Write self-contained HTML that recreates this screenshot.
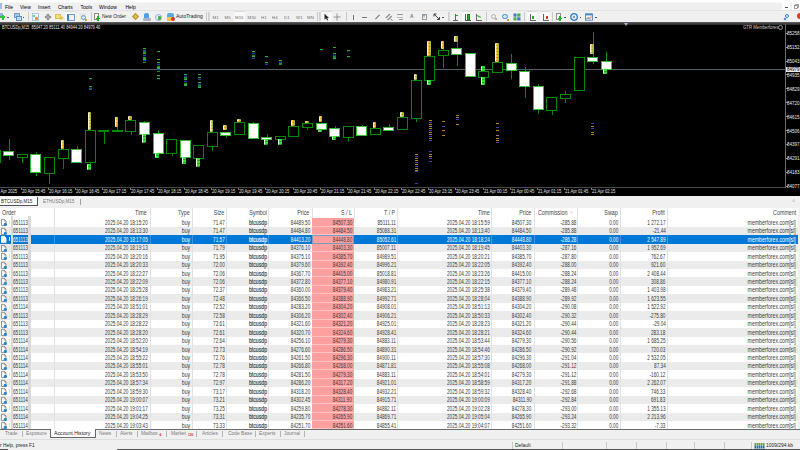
<!DOCTYPE html>
<html><head><meta charset="utf-8"><title>MT5</title>
<style>
html,body{margin:0;padding:0;}
body{width:800px;height:450px;overflow:hidden;position:relative;background:#f0f0f0;font-family:"Liberation Sans",sans-serif;}
div{position:absolute;box-sizing:border-box;}
.t{white-space:pre;}
</style></head><body>
<div style="left:0px;top:0px;width:800px;height:10px;background:linear-gradient(180deg,#ffffff 0 2px,#f0f0f0 3px)"></div><div style="left:0px;top:10px;width:800px;height:1px;background:#e3e3e3"></div><div style="left:0px;top:3px;width:1.5px;height:6px;background:#9cc0ea"></div><div class="t" style="left:5px;top:3.70px;font-size:5.0px;line-height:6.00px;color:#000;">File</div><div class="t" style="left:20px;top:3.70px;font-size:5.0px;line-height:6.00px;color:#000;">View</div><div class="t" style="left:38px;top:3.70px;font-size:5.0px;line-height:6.00px;color:#000;">Insert</div><div class="t" style="left:58px;top:3.70px;font-size:5.0px;line-height:6.00px;color:#000;">Charts</div><div class="t" style="left:80.5px;top:3.70px;font-size:5.0px;line-height:6.00px;color:#000;">Tools</div><div class="t" style="left:99px;top:3.70px;font-size:5.0px;line-height:6.00px;color:#000;">Window</div><div class="t" style="left:125.5px;top:3.70px;font-size:5.0px;line-height:6.00px;color:#000;">Help</div><div style="left:782px;top:2px;width:8px;height:8px;background:#ffffff"></div><div style="left:784.5px;top:7px;width:3px;height:1px;background:#555"></div><div style="left:792px;top:2px;width:8px;height:8px;background:#ffffff"></div><div style="left:792px;top:2px;width:8px;height:8px"><svg width="8" height="8" viewBox="0 0 8 8" style="display:block"><rect x="2.5" y="3.5" width="3" height="3" fill="none" stroke="#777" stroke-width="0.7"/><path d="M3.5,3.5 V2.5 H6.5 V5.5 H5.5" fill="none" stroke="#777" stroke-width="0.7"/></svg></div><div style="left:0px;top:11px;width:800px;height:11px;background:#f0f0f0"></div><div style="left:0px;top:13px;width:3px;height:3px;background:#8fb3d9"></div><div style="left:0px;top:16px;width:5px;height:2px;background:#2ec83a"></div><div style="left:1.5px;top:14.5px;width:2px;height:5px;background:#2ec83a"></div><div style="left:7px;top:16.5px;width:1.6px;height:1.4px;background:#555"></div><div style="left:13.5px;top:13px;width:6px;height:5px;background:#a9c6e6;border:1px solid #6b9bd0"></div><div style="left:15.5px;top:15.5px;width:6px;height:5px;background:#c9dcf0;border:1px solid #5b8cc8"></div><div style="left:22.7px;top:16.5px;width:1.6px;height:1.4px;background:#555"></div><div style="left:28px;top:12px;width:1px;height:9px;background:#c9c9c9"></div><div style="left:32px;top:13px;width:7px;height:7.5px;background:#f4f8fc;border:1px solid #a9c8e8"></div><div style="left:33.3px;top:15px;width:2.2px;height:2.2px;background:#3cc43c;border-radius:50%"></div><div style="left:35.3px;top:17.3px;width:2.4px;height:2.4px;background:#f08050;border-radius:50%"></div><div style="left:43.5px;top:13px;width:8px;height:8px"><svg width="8" height="8" viewBox="0 0 8 8" style="display:block"><path d="M4,0.5 L5.8,2.5 H2.2 Z M4,7.5 L5.8,5.5 H2.2 Z M0.5,4 L2.5,2.2 V5.8 Z M7.5,4 L5.5,2.2 V5.8 Z" fill="#7a7a7a"/><path d="M4,2 V6 M2,4 H6" stroke="#7a7a7a" stroke-width="0.8"/></svg></div><div style="left:55px;top:14px;width:6px;height:5px;background:#f3e07a;border:1px solid #d8c050"></div><div class="t" style="left:58.5px;top:15.20px;font-size:5.5px;line-height:6.60px;color:#e8c020;">&#9733;</div><div style="left:65px;top:11px;width:11px;height:11px;background:#f9f9f9;border-top:1px solid #dcdcdc"></div><div style="left:67px;top:13.5px;width:7.5px;height:7px;background:#eef3fb;border:1px solid #6b9bd0;border-left:2px solid #3d7cc8"></div><div style="left:79.5px;top:13px;width:6px;height:7px;background:#e6e6e6"></div><div style="left:80.5px;top:14.5px;width:5px;height:5px;border:1px solid #5b9bd8;border-radius:50%;background:#dbe9f7"></div><div style="left:85px;top:19px;width:2px;height:2px;background:#d0a030"></div><div style="left:90.5px;top:12px;width:1px;height:9px;background:#c9c9c9"></div><div style="left:94px;top:13px;width:5px;height:7px;background:#f4f4f4;border:1px solid #8a8a8a"></div><div style="left:96px;top:17.5px;width:4px;height:1.5px;background:#1fb52a"></div><div style="left:97.3px;top:16px;width:1.5px;height:4.5px;background:#1fb52a"></div><div class="t" style="left:102px;top:13.49px;font-size:5.5px;line-height:6.60px;color:#222;transform:scaleX(0.9);transform-origin:0 0;">New Order</div><div style="left:132.5px;top:14px;width:5px;height:5px;background:#e8c050;border:1px solid #b8902a;transform:rotate(45deg)"></div><div style="left:144px;top:13px;width:5px;height:5px;background:#4ca0e8;border-radius:2px 2px 0 0"></div><div style="left:143px;top:18px;width:7.5px;height:2.5px;background:#aab4c4;border-radius:1px"></div><div style="left:155px;top:13.5px;width:7px;height:7px;background:#dfeaf5;border:1px solid #8fb0d8;border-radius:50%"></div><div style="left:158px;top:16px;width:2.5px;height:4px;background:#45b045;border-radius:1px"></div><div style="left:166.5px;top:13px;width:7px;height:3.5px;background:#5aa8e0;border-radius:2px 2px 0 0"></div><div style="left:166.5px;top:16.5px;width:7px;height:4px;background:#f0c840"></div><div style="left:170.5px;top:16.5px;width:4px;height:4px;background:#e03030;border-radius:50%"></div><div class="t" style="left:176px;top:13.49px;font-size:5.5px;line-height:6.60px;color:#222;transform:scaleX(0.9);transform-origin:0 0;">AutoTrading</div><div style="left:206px;top:12px;width:1px;height:9px;background:#c9c9c9"></div><div style="left:207.5px;top:12px;width:1px;height:9px;background:#cfcfcf"></div><div style="left:209.0px;top:12px;width:1px;height:9px;background:#d8d8d8"></div><div class="t" style="left:212.5px;top:15.36px;font-size:4.4px;line-height:5.28px;color:#707070;">M1</div><div class="t" style="left:224.5px;top:15.36px;font-size:4.4px;line-height:5.28px;color:#707070;">M5</div><div style="left:234px;top:11px;width:10.5px;height:11px;background:#f9f9f9;border-top:1px solid #dcdcdc"></div><div class="t" style="left:235px;top:15.36px;font-size:4.4px;line-height:5.28px;color:#707070;">M15</div><div class="t" style="left:247.5px;top:15.36px;font-size:4.4px;line-height:5.28px;color:#707070;">M30</div><div class="t" style="left:261px;top:15.36px;font-size:4.4px;line-height:5.28px;color:#707070;">H1</div><div class="t" style="left:272px;top:15.36px;font-size:4.4px;line-height:5.28px;color:#707070;">H4</div><div class="t" style="left:284px;top:15.36px;font-size:4.4px;line-height:5.28px;color:#707070;">D1</div><div class="t" style="left:296px;top:15.36px;font-size:4.4px;line-height:5.28px;color:#707070;">W1</div><div class="t" style="left:307px;top:15.36px;font-size:4.4px;line-height:5.28px;color:#707070;">MN</div><div style="left:316.5px;top:12px;width:1px;height:9px;background:#c9c9c9"></div><div style="left:318.5px;top:12px;width:1px;height:9px;background:#cfcfcf"></div><div style="left:320.0px;top:12px;width:1px;height:9px;background:#d8d8d8"></div><div style="left:321px;top:11px;width:11px;height:11px;background:#f9f9f9;border-top:1px solid #dcdcdc"></div><div style="left:323px;top:13px;width:7px;height:8px"><svg width="7" height="8" viewBox="0 0 7 8" style="display:block"><path d="M1.5,0.8 L1.5,6.8 L3,5.3 L4.2,7.6 L5.2,7.1 L4.1,4.9 L6,4.9 Z" fill="#222"/></svg></div><div style="left:333px;top:13px;width:8px;height:8px"><svg width="8" height="8" viewBox="0 0 8 8" style="display:block"><path d="M4,0.5 V7.5 M0.5,4 H7.5" stroke="#8a8a8a" stroke-width="0.9"/></svg></div><div style="left:345.5px;top:12px;width:1px;height:9px;background:#c9c9c9"></div><div style="left:352.5px;top:14.5px;width:1px;height:5px;background:#777"></div><div style="left:362px;top:17px;width:5px;height:1px;background:#777"></div><div style="left:376.5px;top:14px;width:1px;height:6px;background:#777;transform:rotate(45deg)"></div><div style="left:384.5px;top:13px;width:8px;height:8px"><svg width="8" height="8" viewBox="0 0 8 8" style="display:block"><path d="M0.8,5 L5,1 M2.5,7 L6.8,3" stroke="#8a8a8a" stroke-width="1.1"/><path d="M5.5,6 L7.5,7.5" stroke="#666" stroke-width="0.8"/></svg></div><div style="left:397px;top:14px;width:6px;height:1px;background:#999"></div><div style="left:397px;top:16.5px;width:6px;height:1px;background:#bbb"></div><div style="left:399px;top:19px;width:4px;height:1px;background:#999"></div><div class="t" style="left:410px;top:14.12px;font-size:4.8px;line-height:5.76px;color:#777;font-weight:bold">A</div><div style="left:421.5px;top:14px;width:5.5px;height:6px;border:1px solid #999;background:#f7f7f7"></div><div class="t" style="left:422.8px;top:14.60px;font-size:4px;line-height:4.80px;color:#777;font-weight:bold">T</div><div style="left:432.5px;top:13px;width:8px;height:8px"><svg width="8" height="8" viewBox="0 0 8 8" style="display:block"><path d="M1,1 L6.5,6.5 M1,1 L1,3.5 M1,1 L3.5,1 M6.5,6.5 L4,6.5 M6.5,6.5 L6.5,4" stroke="#444" stroke-width="1"/></svg></div><div style="left:442px;top:16.5px;width:1.6px;height:1.4px;background:#555"></div><div style="left:447.5px;top:12px;width:1px;height:9px;background:#cfcfcf"></div><div style="left:449.0px;top:12px;width:1px;height:9px;background:#d8d8d8"></div><div style="left:455px;top:14px;width:1px;height:6px;background:#666"></div><div style="left:453px;top:19.5px;width:5px;height:1px;background:#666"></div><div style="left:456px;top:15px;width:2px;height:1px;background:#3a3"></div><div style="left:462px;top:11px;width:10px;height:11px;background:#f9f9f9;border-top:1px solid #dcdcdc"></div><div style="left:466.5px;top:14px;width:3px;height:5.5px;background:#2cb82c;border:1px solid #157a15"></div><div style="left:465px;top:19.5px;width:6px;height:1px;background:#555"></div><div style="left:465px;top:13.5px;width:1px;height:7px;background:#555"></div><div style="left:476px;top:14px;width:1px;height:6px;background:#666"></div><div style="left:476px;top:19.5px;width:6px;height:1px;background:#666"></div><div style="left:477px;top:16px;width:4px;height:1px;background:#3a3;transform:rotate(30deg)"></div><div style="left:486px;top:12px;width:1px;height:9px;background:#c9c9c9"></div><div style="left:490.5px;top:13.5px;width:5px;height:5px;border:1px solid #b0b0b0;border-radius:50%"></div><div style="left:495px;top:18px;width:2px;height:2px;background:#b0b0b0"></div><div style="left:502px;top:13.5px;width:5.5px;height:5.5px;border:1px solid #3c8ad8;border-radius:50%;background:#cfe3f7"></div><div style="left:506.5px;top:18.5px;width:2.5px;height:2.5px;background:#d8a030"></div><div style="left:513px;top:13px;width:8px;height:8px"><svg width="8" height="8" viewBox="0 0 8 8" style="display:block"><rect x="0.5" y="0.5" width="3" height="3.2" fill="#3d7cc8"/><rect x="4.2" y="0.5" width="3.3" height="3.2" fill="#4caf50"/><rect x="0.5" y="4.3" width="3" height="3.2" fill="#4caf50"/><rect x="4.2" y="4.3" width="3.3" height="3.2" fill="#3d7cc8"/></svg></div><div style="left:524px;top:12px;width:1px;height:9px;background:#c9c9c9"></div><div style="left:527px;top:11px;width:10px;height:11px;background:#f9f9f9;border-top:1px solid #dcdcdc"></div><div style="left:530px;top:14px;width:1px;height:6px;background:#666"></div><div style="left:530px;top:19.5px;width:6px;height:1px;background:#666"></div><div style="left:532px;top:15.5px;width:2px;height:3px;background:#2a2"></div><div style="left:540px;top:11px;width:9.5px;height:11px;background:#f9f9f9;border-top:1px solid #dcdcdc"></div><div style="left:543px;top:14px;width:1px;height:6px;background:#666"></div><div style="left:543px;top:19.5px;width:6px;height:1px;background:#666"></div><div style="left:545.5px;top:15.5px;width:2px;height:3px;background:#d04020"></div><div style="left:552px;top:12px;width:1px;height:9px;background:#c9c9c9"></div><div style="left:555.5px;top:13px;width:5.5px;height:7px;background:#f2f2f2;border:1px solid #909090"></div><div style="left:558px;top:17.5px;width:4px;height:1.5px;background:#1fb52a"></div><div style="left:559.3px;top:16px;width:1.5px;height:4.5px;background:#1fb52a"></div><div style="left:564px;top:16.5px;width:1.6px;height:1.4px;background:#555"></div><div style="left:569.5px;top:13px;width:8px;height:8px"><svg width="8" height="8" viewBox="0 0 8 8" style="display:block"><circle cx="4" cy="4" r="3.3" fill="#dfeaf6" stroke="#2f78c8" stroke-width="1.3"/><circle cx="4" cy="4" r="0.8" fill="#345"/></svg></div><div style="left:579.5px;top:16.5px;width:1.6px;height:1.4px;background:#555"></div><div style="left:584.5px;top:13px;width:8px;height:8px"><svg width="8" height="8" viewBox="0 0 8 8" style="display:block"><rect x="0.5" y="0.8" width="7" height="6.4" fill="#f4f7fb" stroke="#4a88c8" stroke-width="0.9"/><rect x="0.5" y="0.8" width="7" height="1.6" fill="#4a88c8"/><path d="M1.5,6 L3,4.2 L4.5,5.2 L6.5,3.2" stroke="#e05a30" stroke-width="0.7" fill="none"/><path d="M1.5,6.3 L3,5.2 L4.5,6 L6.5,4.5" stroke="#3aa040" stroke-width="0.6" fill="none"/></svg></div><div style="left:595px;top:16.5px;width:1.6px;height:1.4px;background:#555"></div><div style="left:785px;top:14px;width:4px;height:4px;border:1.2px solid #3f7fd6;border-radius:50%"></div><div style="left:784px;top:17.5px;width:2px;height:2px;background:#3f7fd6;transform:rotate(45deg)"></div><div style="left:797px;top:13px;width:6px;height:6px;background:#e03b24;border-radius:50%"></div><div style="left:0px;top:22px;width:800px;height:1px;background:#5a5a5a"></div><div style="left:0px;top:23px;width:800px;height:1px;background:#404040"></div><div style="left:0px;top:24px;width:800px;height:1px;background:#303030"></div><div style="left:0px;top:25px;width:800px;height:171px;background:#000"></div><div style="left:0;top:0;width:785px;height:450px;overflow:hidden"><div style="left:0px;top:69px;width:785px;height:1px;background:#56606a"></div><div style="left:-10px;top:150px;width:11px;height:13px;background:#000;border:1px solid #008c00"></div><div style="left:9px;top:139px;width:1px;height:12px;background:#008c00"></div><div style="left:9px;top:155px;width:1px;height:5px;background:#008c00"></div><div style="left:3px;top:151px;width:11px;height:5px;background:#fff;border:1px solid #2fbf2f"></div><div style="left:22px;top:157px;width:1px;height:6px;background:#008c00"></div><div style="left:17px;top:154px;width:11px;height:4px;background:#000;border:1px solid #008c00"></div><div style="left:36px;top:152px;width:1px;height:2px;background:#008c00"></div><div style="left:36px;top:172px;width:1px;height:4px;background:#008c00"></div><div style="left:30px;top:154px;width:11px;height:19px;background:#fff;border:1px solid #2fbf2f"></div><div style="left:49px;top:173px;width:1px;height:11px;background:#008c00"></div><div style="left:44px;top:157px;width:11px;height:17px;background:#000;border:1px solid #008c00"></div><div style="left:63px;top:158px;width:1px;height:11px;background:#008c00"></div><div style="left:58px;top:149px;width:11px;height:10px;background:#000;border:1px solid #008c00"></div><div style="left:77px;top:146px;width:1px;height:3px;background:#008c00"></div><div style="left:71px;top:149px;width:11px;height:14px;background:#fff;border:1px solid #2fbf2f"></div><div style="left:90px;top:162px;width:1px;height:2px;background:#008c00"></div><div style="left:85px;top:130px;width:11px;height:33px;background:#000;border:1px solid #008c00"></div><div style="left:104px;top:131px;width:1px;height:13px;background:#008c00"></div><div style="left:98px;top:130px;width:11px;height:2px;background:#000;border:1px solid #008c00"></div><div style="left:117px;top:117px;width:1px;height:13px;background:#008c00"></div><div style="left:112px;top:130px;width:11px;height:2px;background:#000;border:1px solid #008c00"></div><div style="left:131px;top:131px;width:1px;height:4px;background:#008c00"></div><div style="left:125px;top:120px;width:11px;height:12px;background:#000;border:1px solid #008c00"></div><div style="left:144px;top:121px;width:1px;height:1px;background:#008c00"></div><div style="left:139px;top:122px;width:11px;height:13px;background:#fff;border:1px solid #2fbf2f"></div><div style="left:158px;top:130px;width:1px;height:3px;background:#008c00"></div><div style="left:153px;top:133px;width:11px;height:21px;background:#fff;border:1px solid #2fbf2f"></div><div style="left:172px;top:153px;width:1px;height:3px;background:#008c00"></div><div style="left:166px;top:139px;width:11px;height:15px;background:#000;border:1px solid #008c00"></div><div style="left:180px;top:140px;width:11px;height:18px;background:#fff;border:1px solid #2fbf2f"></div><div style="left:193px;top:145px;width:11px;height:14px;background:#000;border:1px solid #008c00"></div><div style="left:212px;top:146px;width:1px;height:5px;background:#008c00"></div><div style="left:207px;top:132px;width:11px;height:15px;background:#000;border:1px solid #008c00"></div><div style="left:226px;top:135px;width:1px;height:3px;background:#008c00"></div><div style="left:220px;top:132px;width:11px;height:4px;background:#fff;border:1px solid #2fbf2f"></div><div style="left:234px;top:122px;width:11px;height:13px;background:#000;border:1px solid #008c00"></div><div style="left:253px;top:122px;width:1px;height:1px;background:#008c00"></div><div style="left:253px;top:138px;width:1px;height:1px;background:#008c00"></div><div style="left:248px;top:123px;width:11px;height:16px;background:#fff;border:1px solid #2fbf2f"></div><div style="left:267px;top:134px;width:1px;height:3px;background:#008c00"></div><div style="left:261px;top:137px;width:11px;height:3px;background:#fff;border:1px solid #2fbf2f"></div><div style="left:275px;top:136px;width:11px;height:4px;background:#000;border:1px solid #008c00"></div><div style="left:288px;top:126px;width:11px;height:11px;background:#000;border:1px solid #008c00"></div><div style="left:307px;top:127px;width:1px;height:3px;background:#008c00"></div><div style="left:302px;top:123px;width:11px;height:5px;background:#000;border:1px solid #008c00"></div><div style="left:321px;top:129px;width:1px;height:1px;background:#008c00"></div><div style="left:316px;top:123px;width:11px;height:7px;background:#fff;border:1px solid #2fbf2f"></div><div style="left:335px;top:126px;width:1px;height:2px;background:#008c00"></div><div style="left:329px;top:128px;width:11px;height:9px;background:#fff;border:1px solid #2fbf2f"></div><div style="left:348px;top:137px;width:1px;height:4px;background:#008c00"></div><div style="left:343px;top:126px;width:11px;height:12px;background:#000;border:1px solid #008c00"></div><div style="left:362px;top:125px;width:1px;height:1px;background:#008c00"></div><div style="left:356px;top:126px;width:11px;height:10px;background:#fff;border:1px solid #2fbf2f"></div><div style="left:370px;top:128px;width:11px;height:7px;background:#000;border:1px solid #008c00"></div><div style="left:389px;top:124px;width:1px;height:3px;background:#008c00"></div><div style="left:383px;top:127px;width:11px;height:4px;background:#fff;border:1px solid #2fbf2f"></div><div style="left:397px;top:117px;width:11px;height:13px;background:#000;border:1px solid #008c00"></div><div style="left:416px;top:118px;width:1px;height:4px;background:#008c00"></div><div style="left:411px;top:80px;width:11px;height:39px;background:#000;border:1px solid #008c00"></div><div style="left:424px;top:56px;width:11px;height:25px;background:#000;border:1px solid #008c00"></div><div style="left:443px;top:41px;width:1px;height:9px;background:#008c00"></div><div style="left:443px;top:55px;width:1px;height:13px;background:#008c00"></div><div style="left:438px;top:50px;width:11px;height:6px;background:#000;border:1px solid #008c00"></div><div style="left:457px;top:36px;width:1px;height:12px;background:#008c00"></div><div style="left:457px;top:54px;width:1px;height:12px;background:#008c00"></div><div style="left:451px;top:48px;width:11px;height:7px;background:#fff;border:1px solid #2fbf2f"></div><div style="left:470px;top:76px;width:1px;height:1px;background:#008c00"></div><div style="left:465px;top:53px;width:11px;height:24px;background:#fff;border:1px solid #2fbf2f"></div><div style="left:478px;top:71px;width:11px;height:7px;background:#000;border:1px solid #008c00"></div><div style="left:492px;top:62px;width:11px;height:11px;background:#000;border:1px solid #008c00"></div><div style="left:511px;top:54px;width:1px;height:9px;background:#008c00"></div><div style="left:511px;top:70px;width:1px;height:9px;background:#008c00"></div><div style="left:506px;top:63px;width:11px;height:8px;background:#fff;border:1px solid #2fbf2f"></div><div style="left:525px;top:67px;width:1px;height:4px;background:#008c00"></div><div style="left:525px;top:86px;width:1px;height:12px;background:#008c00"></div><div style="left:519px;top:71px;width:11px;height:16px;background:#fff;border:1px solid #2fbf2f"></div><div style="left:538px;top:84px;width:1px;height:2px;background:#008c00"></div><div style="left:538px;top:109px;width:1px;height:5px;background:#008c00"></div><div style="left:533px;top:86px;width:11px;height:24px;background:#fff;border:1px solid #2fbf2f"></div><div style="left:552px;top:110px;width:1px;height:5px;background:#008c00"></div><div style="left:546px;top:97px;width:11px;height:14px;background:#000;border:1px solid #008c00"></div><div style="left:565px;top:91px;width:1px;height:3px;background:#008c00"></div><div style="left:565px;top:98px;width:1px;height:5px;background:#008c00"></div><div style="left:560px;top:94px;width:11px;height:5px;background:#000;border:1px solid #008c00"></div><div style="left:579px;top:90px;width:1px;height:1px;background:#008c00"></div><div style="left:574px;top:57px;width:11px;height:34px;background:#000;border:1px solid #008c00"></div><div style="left:593px;top:32px;width:1px;height:25px;background:#008c00"></div><div style="left:593px;top:61px;width:1px;height:3px;background:#008c00"></div><div style="left:587px;top:57px;width:11px;height:5px;background:#fff;border:1px solid #2fbf2f"></div><div style="left:606px;top:52px;width:1px;height:9px;background:#008c00"></div><div style="left:601px;top:61px;width:11px;height:9px;background:#fff;border:1px solid #2fbf2f"></div><div style="left:60.519999999999996px;top:140px;width:3.6px;height:9px;background:linear-gradient(90deg,#fff3c8 0 25%,rgba(0,0,0,0) 25% 60%,rgba(120,170,40,0.55) 60% 100%),repeating-linear-gradient(180deg,#f8d060 0 2px,#ee9a30 2px 3px);border-radius:1px"></div><div style="left:87.68px;top:112px;width:3.6px;height:18px;background:linear-gradient(90deg,#fff3c8 0 25%,rgba(0,0,0,0) 25% 60%,rgba(120,170,40,0.55) 60% 100%),repeating-linear-gradient(180deg,#f8d060 0 2px,#ee9a30 2px 3px);border-radius:1px"></div><div style="left:114.84px;top:117px;width:3.6px;height:10px;background:linear-gradient(90deg,#fff3c8 0 25%,rgba(0,0,0,0) 25% 60%,rgba(120,170,40,0.55) 60% 100%),repeating-linear-gradient(180deg,#f8d060 0 2px,#ee9a30 2px 3px);border-radius:1px"></div><div style="left:128.42px;top:116px;width:3.6px;height:4px;background:linear-gradient(90deg,#fff3c8 0 25%,rgba(0,0,0,0) 25% 60%,rgba(120,170,40,0.55) 60% 100%),repeating-linear-gradient(180deg,#f8d060 0 2px,#ee9a30 2px 3px);border-radius:1px"></div><div style="left:209.89999999999998px;top:120px;width:3.6px;height:12px;background:linear-gradient(90deg,#fff3c8 0 25%,rgba(0,0,0,0) 25% 60%,rgba(120,170,40,0.55) 60% 100%),repeating-linear-gradient(180deg,#f8d060 0 2px,#ee9a30 2px 3px);border-radius:1px"></div><div style="left:223.48px;top:125px;width:3.6px;height:5px;background:linear-gradient(90deg,#fff3c8 0 25%,rgba(0,0,0,0) 25% 60%,rgba(120,170,40,0.55) 60% 100%),repeating-linear-gradient(180deg,#f8d060 0 2px,#ee9a30 2px 3px);border-radius:1px"></div><div style="left:237.06px;top:119px;width:3.6px;height:3px;background:linear-gradient(90deg,#fff3c8 0 25%,rgba(0,0,0,0) 25% 60%,rgba(120,170,40,0.55) 60% 100%),repeating-linear-gradient(180deg,#f8d060 0 2px,#ee9a30 2px 3px);border-radius:1px"></div><div style="left:291.38px;top:120px;width:3.6px;height:6px;background:linear-gradient(90deg,#fff3c8 0 25%,rgba(0,0,0,0) 25% 60%,rgba(120,170,40,0.55) 60% 100%),repeating-linear-gradient(180deg,#f8d060 0 2px,#ee9a30 2px 3px);border-radius:1px"></div><div style="left:304.96px;top:121px;width:3.6px;height:2px;background:linear-gradient(90deg,#fff3c8 0 25%,rgba(0,0,0,0) 25% 60%,rgba(120,170,40,0.55) 60% 100%),repeating-linear-gradient(180deg,#f8d060 0 2px,#ee9a30 2px 3px);border-radius:1px"></div><div style="left:318.53999999999996px;top:116px;width:3.6px;height:6px;background:linear-gradient(90deg,#fff3c8 0 25%,rgba(0,0,0,0) 25% 60%,rgba(120,170,40,0.55) 60% 100%),repeating-linear-gradient(180deg,#f8d060 0 2px,#ee9a30 2px 3px);border-radius:1px"></div><div style="left:372.86px;top:122px;width:3.6px;height:6px;background:linear-gradient(90deg,#fff3c8 0 25%,rgba(0,0,0,0) 25% 60%,rgba(120,170,40,0.55) 60% 100%),repeating-linear-gradient(180deg,#f8d060 0 2px,#ee9a30 2px 3px);border-radius:1px"></div><div style="left:400.02px;top:112px;width:3.6px;height:5px;background:linear-gradient(90deg,#fff3c8 0 25%,rgba(0,0,0,0) 25% 60%,rgba(120,170,40,0.55) 60% 100%),repeating-linear-gradient(180deg,#f8d060 0 2px,#ee9a30 2px 3px);border-radius:1px"></div><div style="left:413.59999999999997px;top:74px;width:3.6px;height:6px;background:linear-gradient(90deg,#fff3c8 0 25%,rgba(0,0,0,0) 25% 60%,rgba(120,170,40,0.55) 60% 100%),repeating-linear-gradient(180deg,#f8d060 0 2px,#ee9a30 2px 3px);border-radius:1px"></div><div style="left:427.18px;top:41px;width:3.6px;height:15px;background:linear-gradient(90deg,#fff3c8 0 25%,rgba(0,0,0,0) 25% 60%,rgba(120,170,40,0.55) 60% 100%),repeating-linear-gradient(180deg,#f8d060 0 2px,#ee9a30 2px 3px);border-radius:1px"></div><div style="left:440.76px;top:41px;width:3.6px;height:8px;background:linear-gradient(90deg,#fff3c8 0 25%,rgba(0,0,0,0) 25% 60%,rgba(120,170,40,0.55) 60% 100%),repeating-linear-gradient(180deg,#f8d060 0 2px,#ee9a30 2px 3px);border-radius:1px"></div><div style="left:454.34px;top:36px;width:3.6px;height:6px;background:linear-gradient(90deg,#fff3c8 0 25%,rgba(0,0,0,0) 25% 60%,rgba(120,170,40,0.55) 60% 100%),repeating-linear-gradient(180deg,#f8d060 0 2px,#ee9a30 2px 3px);border-radius:1px"></div><div style="left:495.08px;top:43px;width:3.6px;height:19px;background:linear-gradient(90deg,#fff3c8 0 25%,rgba(0,0,0,0) 25% 60%,rgba(120,170,40,0.55) 60% 100%),repeating-linear-gradient(180deg,#f8d060 0 2px,#ee9a30 2px 3px);border-radius:1px"></div><div style="left:590.1400000000001px;top:44px;width:3.6px;height:10px;background:linear-gradient(90deg,#fff3c8 0 25%,rgba(0,0,0,0) 25% 60%,rgba(120,170,40,0.55) 60% 100%),repeating-linear-gradient(180deg,#f8d060 0 2px,#ee9a30 2px 3px);border-radius:1px"></div><div style="left:87.38000000000001px;top:164px;width:4px;height:6px;background:linear-gradient(90deg,#e0f8e0 0 25%,rgba(0,0,0,0) 25% 100%),repeating-linear-gradient(180deg,#38e038 0 2px,#20a820 2px 3px);border-radius:1px"></div><div style="left:141.7px;top:134px;width:4px;height:9px;background:linear-gradient(90deg,#e0f8e0 0 25%,rgba(0,0,0,0) 25% 100%),repeating-linear-gradient(180deg,#38e038 0 2px,#20a820 2px 3px);border-radius:1px"></div><div style="left:155.27999999999997px;top:153px;width:4px;height:5px;background:linear-gradient(90deg,#e0f8e0 0 25%,rgba(0,0,0,0) 25% 100%),repeating-linear-gradient(180deg,#38e038 0 2px,#20a820 2px 3px);border-radius:1px"></div><div style="left:182.43999999999997px;top:157px;width:4px;height:7px;background:linear-gradient(90deg,#e0f8e0 0 25%,rgba(0,0,0,0) 25% 100%),repeating-linear-gradient(180deg,#38e038 0 2px,#20a820 2px 3px);border-radius:1px"></div><div style="left:196.01999999999998px;top:158px;width:4px;height:9px;background:linear-gradient(90deg,#e0f8e0 0 25%,rgba(0,0,0,0) 25% 100%),repeating-linear-gradient(180deg,#38e038 0 2px,#20a820 2px 3px);border-radius:1px"></div><div style="left:263.91999999999996px;top:139px;width:4px;height:6px;background:linear-gradient(90deg,#e0f8e0 0 25%,rgba(0,0,0,0) 25% 100%),repeating-linear-gradient(180deg,#38e038 0 2px,#20a820 2px 3px);border-radius:1px"></div><div style="left:277.5px;top:139px;width:4px;height:6px;background:linear-gradient(90deg,#e0f8e0 0 25%,rgba(0,0,0,0) 25% 100%),repeating-linear-gradient(180deg,#38e038 0 2px,#20a820 2px 3px);border-radius:1px"></div><div style="left:318.23999999999995px;top:130px;width:4px;height:2px;background:linear-gradient(90deg,#e0f8e0 0 25%,rgba(0,0,0,0) 25% 100%),repeating-linear-gradient(180deg,#38e038 0 2px,#20a820 2px 3px);border-radius:1px"></div><div style="left:331.82px;top:136px;width:4px;height:4px;background:linear-gradient(90deg,#e0f8e0 0 25%,rgba(0,0,0,0) 25% 100%),repeating-linear-gradient(180deg,#38e038 0 2px,#20a820 2px 3px);border-radius:1px"></div><div style="left:426.88px;top:80px;width:4px;height:5px;background:linear-gradient(90deg,#e0f8e0 0 25%,rgba(0,0,0,0) 25% 100%),repeating-linear-gradient(180deg,#38e038 0 2px,#20a820 2px 3px);border-radius:1px"></div><div style="left:481.2px;top:66px;width:4px;height:5px;background:linear-gradient(90deg,#e0f8e0 0 25%,rgba(0,0,0,0) 25% 100%),repeating-linear-gradient(180deg,#38e038 0 2px,#20a820 2px 3px);border-radius:1px"></div><div style="left:481.2px;top:77px;width:4px;height:8px;background:linear-gradient(90deg,#e0f8e0 0 25%,rgba(0,0,0,0) 25% 100%),repeating-linear-gradient(180deg,#38e038 0 2px,#20a820 2px 3px);border-radius:1px"></div><div style="left:603.4200000000001px;top:69px;width:4px;height:5px;background:linear-gradient(90deg,#e0f8e0 0 25%,rgba(0,0,0,0) 25% 100%),repeating-linear-gradient(180deg,#38e038 0 2px,#20a820 2px 3px);border-radius:1px"></div></div><div style="left:88.5px;top:78px;width:3.5px;height:2px;background:repeating-linear-gradient(180deg,#2fb03a 0 1.3px,#0a1a30 1.3px 1.9px,#2038b0 1.9px 2.9px,#062008 2.9px 3.5px,#1c8a28 3.5px 4.6px,#040404 4.6px 5.2px)"></div><div style="left:88.5px;top:86px;width:3.5px;height:4px;background:repeating-linear-gradient(180deg,#2fb03a 0 1.3px,#0a1a30 1.3px 1.9px,#2038b0 1.9px 2.9px,#062008 2.9px 3.5px,#1c8a28 3.5px 4.6px,#040404 4.6px 5.2px)"></div><div style="left:142.5px;top:48px;width:3.5px;height:16px;background:repeating-linear-gradient(180deg,#2fb03a 0 1.3px,#0a1a30 1.3px 1.9px,#2038b0 1.9px 2.9px,#062008 2.9px 3.5px,#1c8a28 3.5px 4.6px,#040404 4.6px 5.2px)"></div><div style="left:156.5px;top:51px;width:3.5px;height:1px;background:repeating-linear-gradient(180deg,#2fb03a 0 1.3px,#0a1a30 1.3px 1.9px,#2038b0 1.9px 2.9px,#062008 2.9px 3.5px,#1c8a28 3.5px 4.6px,#040404 4.6px 5.2px)"></div><div style="left:156.5px;top:59px;width:3.5px;height:1px;background:repeating-linear-gradient(180deg,#2fb03a 0 1.3px,#0a1a30 1.3px 1.9px,#2038b0 1.9px 2.9px,#062008 2.9px 3.5px,#1c8a28 3.5px 4.6px,#040404 4.6px 5.2px)"></div><div style="left:156.5px;top:62px;width:3.5px;height:10px;background:repeating-linear-gradient(180deg,#2fb03a 0 1.3px,#0a1a30 1.3px 1.9px,#2038b0 1.9px 2.9px,#062008 2.9px 3.5px,#1c8a28 3.5px 4.6px,#040404 4.6px 5.2px)"></div><div style="left:156.5px;top:75px;width:3.5px;height:2px;background:repeating-linear-gradient(180deg,#2fb03a 0 1.3px,#0a1a30 1.3px 1.9px,#2038b0 1.9px 2.9px,#062008 2.9px 3.5px,#1c8a28 3.5px 4.6px,#040404 4.6px 5.2px)"></div><div style="left:156.5px;top:78px;width:3.5px;height:2px;background:repeating-linear-gradient(180deg,#2fb03a 0 1.3px,#0a1a30 1.3px 1.9px,#2038b0 1.9px 2.9px,#062008 2.9px 3.5px,#1c8a28 3.5px 4.6px,#040404 4.6px 5.2px)"></div><div style="left:183.5px;top:74px;width:3.5px;height:12px;background:repeating-linear-gradient(180deg,#2fb03a 0 1.3px,#0a1a30 1.3px 1.9px,#2038b0 1.9px 2.9px,#062008 2.9px 3.5px,#1c8a28 3.5px 4.6px,#040404 4.6px 5.2px)"></div><div style="left:197.5px;top:74px;width:3.5px;height:2px;background:repeating-linear-gradient(180deg,#2fb03a 0 1.3px,#0a1a30 1.3px 1.9px,#2038b0 1.9px 2.9px,#062008 2.9px 3.5px,#1c8a28 3.5px 4.6px,#040404 4.6px 5.2px)"></div><div style="left:197.5px;top:77px;width:3.5px;height:3px;background:repeating-linear-gradient(180deg,#2fb03a 0 1.3px,#0a1a30 1.3px 1.9px,#2038b0 1.9px 2.9px,#062008 2.9px 3.5px,#1c8a28 3.5px 4.6px,#040404 4.6px 5.2px)"></div><div style="left:197.5px;top:82px;width:3.5px;height:6px;background:repeating-linear-gradient(180deg,#2fb03a 0 1.3px,#0a1a30 1.3px 1.9px,#2038b0 1.9px 2.9px,#062008 2.9px 3.5px,#1c8a28 3.5px 4.6px,#040404 4.6px 5.2px)"></div><div style="left:251.5px;top:51px;width:3.5px;height:8px;background:repeating-linear-gradient(180deg,#2fb03a 0 1.3px,#0a1a30 1.3px 1.9px,#2038b0 1.9px 2.9px,#062008 2.9px 3.5px,#1c8a28 3.5px 4.6px,#040404 4.6px 5.2px)"></div><div style="left:264.5px;top:56px;width:3.5px;height:2px;background:repeating-linear-gradient(180deg,#2fb03a 0 1.3px,#0a1a30 1.3px 1.9px,#2038b0 1.9px 2.9px,#062008 2.9px 3.5px,#1c8a28 3.5px 4.6px,#040404 4.6px 5.2px)"></div><div style="left:264.5px;top:62px;width:3.5px;height:3px;background:repeating-linear-gradient(180deg,#2fb03a 0 1.3px,#0a1a30 1.3px 1.9px,#2038b0 1.9px 2.9px,#062008 2.9px 3.5px,#1c8a28 3.5px 4.6px,#040404 4.6px 5.2px)"></div><div style="left:278.5px;top:60px;width:3.5px;height:5px;background:repeating-linear-gradient(180deg,#2fb03a 0 1.3px,#0a1a30 1.3px 1.9px,#2038b0 1.9px 2.9px,#062008 2.9px 3.5px,#1c8a28 3.5px 4.6px,#040404 4.6px 5.2px)"></div><div style="left:319.5px;top:49px;width:3.5px;height:2px;background:repeating-linear-gradient(180deg,#2fb03a 0 1.3px,#0a1a30 1.3px 1.9px,#2038b0 1.9px 2.9px,#062008 2.9px 3.5px,#1c8a28 3.5px 4.6px,#040404 4.6px 5.2px)"></div><div style="left:332.5px;top:47px;width:3.5px;height:1px;background:repeating-linear-gradient(180deg,#2fb03a 0 1.3px,#0a1a30 1.3px 1.9px,#2038b0 1.9px 2.9px,#062008 2.9px 3.5px,#1c8a28 3.5px 4.6px,#040404 4.6px 5.2px)"></div><div style="left:332.5px;top:53px;width:3.5px;height:7px;background:repeating-linear-gradient(180deg,#2fb03a 0 1.3px,#0a1a30 1.3px 1.9px,#2038b0 1.9px 2.9px,#062008 2.9px 3.5px,#1c8a28 3.5px 4.6px,#040404 4.6px 5.2px)"></div><div style="left:346.5px;top:50px;width:3.5px;height:2px;background:repeating-linear-gradient(180deg,#2fb03a 0 1.3px,#0a1a30 1.3px 1.9px,#2038b0 1.9px 2.9px,#062008 2.9px 3.5px,#1c8a28 3.5px 4.6px,#040404 4.6px 5.2px)"></div><div style="left:346.5px;top:56px;width:3.5px;height:2px;background:repeating-linear-gradient(180deg,#2fb03a 0 1.3px,#0a1a30 1.3px 1.9px,#2038b0 1.9px 2.9px,#062008 2.9px 3.5px,#1c8a28 3.5px 4.6px,#040404 4.6px 5.2px)"></div><div style="left:414.5px;top:154px;width:3.5px;height:1.2px;background:#b88028"></div><div style="left:414.5px;top:156px;width:3.5px;height:1.2px;background:#4a3cb0"></div><div style="left:414.5px;top:158px;width:3.5px;height:1.2px;background:#b88028"></div><div style="left:414.5px;top:160px;width:3.5px;height:1.2px;background:#b88028"></div><div style="left:414.5px;top:162px;width:3.5px;height:1.2px;background:#4a3cb0"></div><div style="left:414.5px;top:164px;width:3.5px;height:1.2px;background:#b88028"></div><div style="left:414.5px;top:166px;width:3.5px;height:1.2px;background:#4a3cb0"></div><div style="left:414.5px;top:168px;width:3.5px;height:1.2px;background:#b88028"></div><div style="left:414.5px;top:170px;width:3.5px;height:1.2px;background:#b88028"></div><div style="left:414.5px;top:171px;width:3.5px;height:1.2px;background:#4a3cb0"></div><div style="left:414.5px;top:183px;width:3.5px;height:1.2px;background:#4a3cb0"></div><div style="left:428.5px;top:120px;width:3.5px;height:1.2px;background:#b88028"></div><div style="left:428.5px;top:122px;width:3.5px;height:1.2px;background:#4a3cb0"></div><div style="left:428.5px;top:124px;width:3.5px;height:1.2px;background:#b88028"></div><div style="left:428.5px;top:126px;width:3.5px;height:1.2px;background:#9a7a9a"></div><div style="left:428.5px;top:128px;width:3.5px;height:1.2px;background:#b88028"></div><div style="left:428.5px;top:130px;width:3.5px;height:1.2px;background:#4a3cb0"></div><div style="left:428.5px;top:132px;width:3.5px;height:1.2px;background:#b88028"></div><div style="left:428.5px;top:134px;width:3.5px;height:1.2px;background:#9a7a9a"></div><div style="left:428.5px;top:136px;width:3.5px;height:1.2px;background:#4a3cb0"></div><div style="left:428.5px;top:138px;width:3.5px;height:1.2px;background:#b88028"></div><div style="left:428.5px;top:140px;width:3.5px;height:1.2px;background:#4a3cb0"></div><div style="left:428.5px;top:151px;width:3.5px;height:1.2px;background:#4a3cb0"></div><div style="left:428.5px;top:154px;width:3.5px;height:1.2px;background:#b88028"></div><div style="left:428.5px;top:156px;width:3.5px;height:1.2px;background:#b88028"></div><div style="left:428.5px;top:158px;width:3.5px;height:1.2px;background:#4a3cb0"></div><div style="left:428.5px;top:161px;width:3.5px;height:1.2px;background:#4a3cb0"></div><div style="left:441.5px;top:121px;width:3.5px;height:1.2px;background:#b88028"></div><div style="left:441.5px;top:126px;width:3.5px;height:1.2px;background:#4a3cb0"></div><div style="left:441.5px;top:130px;width:3.5px;height:1.2px;background:#b88028"></div><div style="left:441.5px;top:135px;width:3.5px;height:1.2px;background:#b88028"></div><div style="left:455.5px;top:115px;width:3.5px;height:1.2px;background:#b88028"></div><div style="left:455.5px;top:117px;width:3.5px;height:1.2px;background:#9a7a9a"></div><div style="left:455.5px;top:119px;width:3.5px;height:1.2px;background:#4a3cb0"></div><div style="left:455.5px;top:124px;width:3.5px;height:1.2px;background:#b88028"></div><div style="left:495.5px;top:123px;width:3.5px;height:1.2px;background:#b88028"></div><div style="left:495.5px;top:127px;width:3.5px;height:1.2px;background:#4a3cb0"></div><div style="left:495.5px;top:130px;width:3.5px;height:1.2px;background:#b88028"></div><div style="left:495.5px;top:135px;width:3.5px;height:1.2px;background:#9a7a9a"></div><div style="left:495.5px;top:138px;width:3.5px;height:1.2px;background:#b88028"></div><div style="left:495.5px;top:140px;width:3.5px;height:1.2px;background:#b88028"></div><div style="left:495.5px;top:142px;width:3.5px;height:1.2px;background:#4a3cb0"></div><div style="left:590.5px;top:123px;width:3.5px;height:1.2px;background:#4a3cb0"></div><div style="left:590.5px;top:126px;width:3.5px;height:1.2px;background:#b88028"></div><div style="left:590.5px;top:128px;width:3.5px;height:1.2px;background:#4a3cb0"></div><div style="left:590.5px;top:132px;width:3.5px;height:1.2px;background:#b88028"></div><div style="left:590.5px;top:134px;width:3.5px;height:1.2px;background:#b88028"></div><div style="left:623.5px;top:23px;width:0;height:0;border-left:2.5px solid transparent;border-right:2.5px solid transparent;border-top:3px solid #a8b8c8"></div><div class="t" style="left:1.5px;top:24.96px;font-size:4.9px;line-height:5.88px;color:#e8e8e8;transform:scaleX(0.81);transform-origin:0 0;">BTCUSDp,M15  85047.20 85111.40 84944.20 84979.40</div><div class="t" style="left:743px;top:25.24px;font-size:4.6px;line-height:5.52px;color:#d0d0d0;transform:scaleX(0.93);transform-origin:0 0;">GTR Memberforex</div><div style="left:778px;top:25px;width:5px;height:5px;border:1px solid #9a9a9a;border-radius:50%"></div><div style="left:785px;top:24px;width:1px;height:164px;background:#6a6a6a"></div><div style="left:786px;top:33px;width:1.5px;height:1px;background:#8a8a8a"></div><div class="t" style="left:787px;top:31.16px;font-size:4.9px;line-height:5.88px;color:#e8e8e8;transform:scaleX(0.92);transform-origin:0 0;">85258.2</div><div style="left:786px;top:47px;width:1.5px;height:1px;background:#8a8a8a"></div><div class="t" style="left:787px;top:45.06px;font-size:4.9px;line-height:5.88px;color:#e8e8e8;transform:scaleX(0.92);transform-origin:0 0;">85152.6</div><div style="left:786px;top:61px;width:1.5px;height:1px;background:#8a8a8a"></div><div class="t" style="left:787px;top:58.96px;font-size:4.9px;line-height:5.88px;color:#e8e8e8;transform:scaleX(0.92);transform-origin:0 0;">85043.6</div><div style="left:786px;top:74px;width:1.5px;height:1px;background:#8a8a8a"></div><div class="t" style="left:787px;top:72.86px;font-size:4.9px;line-height:5.88px;color:#e8e8e8;transform:scaleX(0.92);transform-origin:0 0;">84935.0</div><div style="left:786px;top:88px;width:1.5px;height:1px;background:#8a8a8a"></div><div class="t" style="left:787px;top:86.86px;font-size:4.9px;line-height:5.88px;color:#e8e8e8;transform:scaleX(0.92);transform-origin:0 0;">84829.4</div><div style="left:786px;top:102px;width:1.5px;height:1px;background:#8a8a8a"></div><div class="t" style="left:787px;top:100.66px;font-size:4.9px;line-height:5.88px;color:#e8e8e8;transform:scaleX(0.92);transform-origin:0 0;">84720.6</div><div style="left:786px;top:116px;width:1.5px;height:1px;background:#8a8a8a"></div><div class="t" style="left:787px;top:114.66px;font-size:4.9px;line-height:5.88px;color:#e8e8e8;transform:scaleX(0.92);transform-origin:0 0;">84615.0</div><div style="left:786px;top:130px;width:1.5px;height:1px;background:#8a8a8a"></div><div class="t" style="left:787px;top:128.56px;font-size:4.9px;line-height:5.88px;color:#e8e8e8;transform:scaleX(0.92);transform-origin:0 0;">84506.2</div><div style="left:786px;top:144px;width:1.5px;height:1px;background:#8a8a8a"></div><div class="t" style="left:787px;top:142.46px;font-size:4.9px;line-height:5.88px;color:#e8e8e8;transform:scaleX(0.92);transform-origin:0 0;">84397.4</div><div style="left:786px;top:158px;width:1.5px;height:1px;background:#8a8a8a"></div><div class="t" style="left:787px;top:156.36px;font-size:4.9px;line-height:5.88px;color:#e8e8e8;transform:scaleX(0.92);transform-origin:0 0;">84291.8</div><div style="left:786px;top:172px;width:1.5px;height:1px;background:#8a8a8a"></div><div class="t" style="left:787px;top:170.16px;font-size:4.9px;line-height:5.88px;color:#e8e8e8;transform:scaleX(0.92);transform-origin:0 0;">84183.0</div><div style="left:786px;top:186px;width:1.5px;height:1px;background:#8a8a8a"></div><div class="t" style="left:787px;top:184.06px;font-size:4.9px;line-height:5.88px;color:#e8e8e8;transform:scaleX(0.92);transform-origin:0 0;">84077.4</div><div style="left:786px;top:67px;width:14px;height:5px;background:#e8e8e8"></div><div class="t" style="left:787px;top:66.66px;font-size:4.9px;line-height:5.88px;color:#000;transform:scaleX(0.92);transform-origin:0 0;">84979.4</div><div style="left:0px;top:187px;width:785px;height:1px;background:#4a4a4a"></div><div style="left:-6px;top:188px;width:1px;height:1.5px;background:#777"></div><div class="t" style="left:-5.149999999999999px;top:189.06px;font-size:4.9px;line-height:5.88px;color:#e4e4e4;transform:scaleX(0.84);transform-origin:0 0;">20 Apr 2025</div><div style="left:21px;top:188px;width:1px;height:1.5px;background:#777"></div><div class="t" style="left:22.0px;top:189.06px;font-size:4.9px;line-height:5.88px;color:#e4e4e4;transform:scaleX(0.84);transform-origin:0 0;">20 Apr 15:45</div><div style="left:48px;top:188px;width:1px;height:1.5px;background:#777"></div><div class="t" style="left:49.15px;top:189.06px;font-size:4.9px;line-height:5.88px;color:#e4e4e4;transform:scaleX(0.84);transform-origin:0 0;">20 Apr 16:15</div><div style="left:75px;top:188px;width:1px;height:1.5px;background:#777"></div><div class="t" style="left:76.3px;top:189.06px;font-size:4.9px;line-height:5.88px;color:#e4e4e4;transform:scaleX(0.84);transform-origin:0 0;">20 Apr 16:45</div><div style="left:102px;top:188px;width:1px;height:1.5px;background:#777"></div><div class="t" style="left:103.44999999999999px;top:189.06px;font-size:4.9px;line-height:5.88px;color:#e4e4e4;transform:scaleX(0.84);transform-origin:0 0;">20 Apr 17:15</div><div style="left:130px;top:188px;width:1px;height:1.5px;background:#777"></div><div class="t" style="left:130.6px;top:189.06px;font-size:4.9px;line-height:5.88px;color:#e4e4e4;transform:scaleX(0.84);transform-origin:0 0;">20 Apr 17:45</div><div style="left:157px;top:188px;width:1px;height:1.5px;background:#777"></div><div class="t" style="left:157.75px;top:189.06px;font-size:4.9px;line-height:5.88px;color:#e4e4e4;transform:scaleX(0.84);transform-origin:0 0;">20 Apr 18:15</div><div style="left:184px;top:188px;width:1px;height:1.5px;background:#777"></div><div class="t" style="left:184.89999999999998px;top:189.06px;font-size:4.9px;line-height:5.88px;color:#e4e4e4;transform:scaleX(0.84);transform-origin:0 0;">20 Apr 18:45</div><div style="left:211px;top:188px;width:1px;height:1.5px;background:#777"></div><div class="t" style="left:212.04999999999998px;top:189.06px;font-size:4.9px;line-height:5.88px;color:#e4e4e4;transform:scaleX(0.84);transform-origin:0 0;">20 Apr 19:15</div><div style="left:238px;top:188px;width:1px;height:1.5px;background:#777"></div><div class="t" style="left:239.2px;top:189.06px;font-size:4.9px;line-height:5.88px;color:#e4e4e4;transform:scaleX(0.84);transform-origin:0 0;">20 Apr 19:45</div><div style="left:265px;top:188px;width:1px;height:1.5px;background:#777"></div><div class="t" style="left:266.35px;top:189.06px;font-size:4.9px;line-height:5.88px;color:#e4e4e4;transform:scaleX(0.84);transform-origin:0 0;">20 Apr 20:15</div><div style="left:293px;top:188px;width:1px;height:1.5px;background:#777"></div><div class="t" style="left:293.5px;top:189.06px;font-size:4.9px;line-height:5.88px;color:#e4e4e4;transform:scaleX(0.84);transform-origin:0 0;">20 Apr 20:45</div><div style="left:320px;top:188px;width:1px;height:1.5px;background:#777"></div><div class="t" style="left:320.65px;top:189.06px;font-size:4.9px;line-height:5.88px;color:#e4e4e4;transform:scaleX(0.84);transform-origin:0 0;">20 Apr 21:15</div><div style="left:347px;top:188px;width:1px;height:1.5px;background:#777"></div><div class="t" style="left:347.79999999999995px;top:189.06px;font-size:4.9px;line-height:5.88px;color:#e4e4e4;transform:scaleX(0.84);transform-origin:0 0;">20 Apr 21:45</div><div style="left:374px;top:188px;width:1px;height:1.5px;background:#777"></div><div class="t" style="left:374.95px;top:189.06px;font-size:4.9px;line-height:5.88px;color:#e4e4e4;transform:scaleX(0.84);transform-origin:0 0;">20 Apr 22:15</div><div style="left:401px;top:188px;width:1px;height:1.5px;background:#777"></div><div class="t" style="left:402.09999999999997px;top:189.06px;font-size:4.9px;line-height:5.88px;color:#e4e4e4;transform:scaleX(0.84);transform-origin:0 0;">20 Apr 22:45</div><div style="left:428px;top:188px;width:1px;height:1.5px;background:#777"></div><div class="t" style="left:429.25px;top:189.06px;font-size:4.9px;line-height:5.88px;color:#e4e4e4;transform:scaleX(0.84);transform-origin:0 0;">20 Apr 23:15</div><div style="left:455px;top:188px;width:1px;height:1.5px;background:#777"></div><div class="t" style="left:456.4px;top:189.06px;font-size:4.9px;line-height:5.88px;color:#e4e4e4;transform:scaleX(0.84);transform-origin:0 0;">20 Apr 23:45</div><div style="left:483px;top:188px;width:1px;height:1.5px;background:#777"></div><div class="t" style="left:483.54999999999995px;top:189.06px;font-size:4.9px;line-height:5.88px;color:#e4e4e4;transform:scaleX(0.84);transform-origin:0 0;">21 Apr 00:15</div><div style="left:510px;top:188px;width:1px;height:1.5px;background:#777"></div><div class="t" style="left:510.7px;top:189.06px;font-size:4.9px;line-height:5.88px;color:#e4e4e4;transform:scaleX(0.84);transform-origin:0 0;">21 Apr 00:45</div><div style="left:537px;top:188px;width:1px;height:1.5px;background:#777"></div><div class="t" style="left:537.85px;top:189.06px;font-size:4.9px;line-height:5.88px;color:#e4e4e4;transform:scaleX(0.84);transform-origin:0 0;">21 Apr 01:15</div><div style="left:564px;top:188px;width:1px;height:1.5px;background:#777"></div><div class="t" style="left:565.0px;top:189.06px;font-size:4.9px;line-height:5.88px;color:#e4e4e4;transform:scaleX(0.84);transform-origin:0 0;">21 Apr 01:45</div><div style="left:591px;top:188px;width:1px;height:1.5px;background:#777"></div><div class="t" style="left:592.15px;top:189.06px;font-size:4.9px;line-height:5.88px;color:#e4e4e4;transform:scaleX(0.84);transform-origin:0 0;">21 Apr 02:15</div><div style="left:0px;top:197px;width:800px;height:11px;background:#f0f0f0"></div><div style="left:0px;top:197px;width:38px;height:9px;background:#fff;border-right:1px solid #555;border-bottom:1px solid #555"></div><div class="t" style="left:1px;top:198.38px;font-size:5.3px;line-height:6.36px;color:#222;transform:scaleX(0.86);transform-origin:0 0;">BTCUSDp,M15</div><div class="t" style="left:43px;top:198.38px;font-size:5.3px;line-height:6.36px;color:#777;transform:scaleX(0.86);transform-origin:0 0;">ETHUSDp,M15</div><div style="left:80px;top:199px;width:1px;height:6px;background:#a0a0a0"></div><div class="t" style="left:792.5px;top:199.40px;font-size:3.5px;line-height:4.20px;color:#999;">4</div><div style="left:0px;top:208px;width:798px;height:10px;background:#fff"></div><div style="left:798px;top:208px;width:2px;height:222px;background:#f0f0f0"></div><div class="t" style="left:2px;top:209.14px;font-size:6.3px;line-height:7.56px;color:#444;transform:scaleX(0.85);transform-origin:0 0;">Order</div><div class="t" style="right:653.50px;top:209.14px;font-size:6.3px;line-height:7.56px;color:#444;transform:scaleX(0.85);transform-origin:100% 0;">Time</div><div class="t" style="right:610.00px;top:209.14px;font-size:6.3px;line-height:7.56px;color:#444;transform:scaleX(0.85);transform-origin:100% 0;">Type</div><div class="t" style="right:575.50px;top:209.14px;font-size:6.3px;line-height:7.56px;color:#444;transform:scaleX(0.85);transform-origin:100% 0;">Size</div><div class="t" style="right:533.50px;top:209.14px;font-size:6.3px;line-height:7.56px;color:#444;transform:scaleX(0.85);transform-origin:100% 0;">Symbol</div><div class="t" style="right:490.50px;top:209.14px;font-size:6.3px;line-height:7.56px;color:#444;transform:scaleX(0.85);transform-origin:100% 0;">Price</div><div class="t" style="right:448.00px;top:209.14px;font-size:6.3px;line-height:7.56px;color:#444;transform:scaleX(0.85);transform-origin:100% 0;">S / L</div><div class="t" style="right:405.00px;top:209.14px;font-size:6.3px;line-height:7.56px;color:#444;transform:scaleX(0.85);transform-origin:100% 0;">T / P</div><div class="t" style="right:310.50px;top:209.14px;font-size:6.3px;line-height:7.56px;color:#444;transform:scaleX(0.85);transform-origin:100% 0;">Time</div><div class="t" style="right:268.50px;top:209.14px;font-size:6.3px;line-height:7.56px;color:#444;transform:scaleX(0.85);transform-origin:100% 0;">Price</div><div class="t" style="left:538px;top:209.14px;font-size:6.3px;line-height:7.56px;color:#444;transform:scaleX(0.85);transform-origin:0 0;">Commission</div><div class="t" style="right:182.50px;top:209.14px;font-size:6.3px;line-height:7.56px;color:#444;transform:scaleX(0.85);transform-origin:100% 0;">Swap</div><div class="t" style="right:135.00px;top:209.14px;font-size:6.3px;line-height:7.56px;color:#444;transform:scaleX(0.85);transform-origin:100% 0;">Profit</div><div class="t" style="right:4.00px;top:209.14px;font-size:6.3px;line-height:7.56px;color:#444;transform:scaleX(0.85);transform-origin:100% 0;">Comment</div><div class="t" style="left:570px;top:210.30px;font-size:4.5px;line-height:5.40px;color:#aaa;">&#9663;</div><div style="left:0px;top:218px;width:798px;height:9px;background:#ffffff"></div><div style="left:312px;top:218px;width:41.5px;height:9px;background:#ffa0a0"></div><div style="left:312px;top:226px;width:41.5px;height:1px;background:#ffc4c4"></div><div style="left:0;top:218px;width:9px;height:9px"><svg width="9" height="9" style="display:block"><path d="M1.5,1.3 H4.3 L6,3 V7.6 H1.5 Z" fill="#fff" stroke="#7a7a7a" stroke-width="0.8"/><path d="M4.3,1.3 V3 H6" fill="none" stroke="#7a7a7a" stroke-width="0.6"/><circle cx="5.3" cy="6.4" r="1.6" fill="#1f86d8"/></svg></div><div style="left:9px;top:220px;width:1px;height:4px;background:#ebe6b8"></div><div class="t" style="left:13px;top:218.89px;font-size:6.3px;line-height:7.56px;color:#3a3a3a;transform:scaleX(0.74);transform-origin:0 0;">6511132</div><div class="t" style="right:652.40px;top:218.89px;font-size:6.3px;line-height:7.56px;color:#3a3a3a;transform:scaleX(0.74);transform-origin:100% 0;">2025.04.20 18:15:20</div><div class="t" style="right:609.80px;top:218.89px;font-size:6.3px;line-height:7.56px;color:#3a3a3a;transform:scaleX(0.82);transform-origin:100% 0;">buy</div><div class="t" style="right:575.50px;top:218.89px;font-size:6.3px;line-height:7.56px;color:#3a3a3a;transform:scaleX(0.74);transform-origin:100% 0;">71.47</div><div class="t" style="right:532.80px;top:218.89px;font-size:6.3px;line-height:7.56px;color:#3a3a3a;transform:scaleX(0.82);transform-origin:100% 0;-webkit-text-stroke:0.15px currentColor">btcusdp</div><div class="t" style="right:490.00px;top:218.89px;font-size:6.3px;line-height:7.56px;color:#3a3a3a;transform:scaleX(0.74);transform-origin:100% 0;">84489.50</div><div class="t" style="right:448.00px;top:218.89px;font-size:6.3px;line-height:7.56px;color:#3a3a3a;transform:scaleX(0.74);transform-origin:100% 0;">84507.30</div><div class="t" style="right:404.20px;top:218.89px;font-size:6.3px;line-height:7.56px;color:#3a3a3a;transform:scaleX(0.74);transform-origin:100% 0;">85111.11</div><div class="t" style="right:310.50px;top:218.89px;font-size:6.3px;line-height:7.56px;color:#3a3a3a;transform:scaleX(0.74);transform-origin:100% 0;">2025.04.20 18:15:59</div><div class="t" style="right:268.50px;top:218.89px;font-size:6.3px;line-height:7.56px;color:#3a3a3a;transform:scaleX(0.74);transform-origin:100% 0;">84507.30</div><div class="t" style="right:224.00px;top:218.89px;font-size:6.3px;line-height:7.56px;color:#3a3a3a;transform:scaleX(0.74);transform-origin:100% 0;">-285.88</div><div class="t" style="right:181.80px;top:218.89px;font-size:6.3px;line-height:7.56px;color:#3a3a3a;transform:scaleX(0.74);transform-origin:100% 0;">0.00</div><div class="t" style="right:134.30px;top:218.89px;font-size:6.3px;line-height:7.56px;color:#3a3a3a;transform:scaleX(0.74);transform-origin:100% 0;">1 272.17</div><div class="t" style="right:4.00px;top:218.89px;font-size:6.3px;line-height:7.56px;color:#3a3a3a;transform:scaleX(0.82);transform-origin:100% 0;">memberforex.com[sl]</div><div style="left:0px;top:227px;width:798px;height:8px;background:#ebebeb"></div><div style="left:312px;top:227px;width:41.5px;height:8px;background:#ffa0a0"></div><div style="left:312px;top:234px;width:41.5px;height:1px;background:#ffc4c4"></div><div style="left:0;top:227px;width:9px;height:9px"><svg width="9" height="9" style="display:block"><path d="M1.5,1.3 H4.3 L6,3 V7.6 H1.5 Z" fill="#fff" stroke="#7a7a7a" stroke-width="0.8"/><path d="M4.3,1.3 V3 H6" fill="none" stroke="#7a7a7a" stroke-width="0.6"/><circle cx="5.3" cy="6.4" r="1.6" fill="#1f86d8"/></svg></div><div style="left:9px;top:229px;width:1px;height:4px;background:#ebe6b8"></div><div class="t" style="left:13px;top:227.33px;font-size:6.3px;line-height:7.56px;color:#3a3a3a;transform:scaleX(0.74);transform-origin:0 0;">6511132</div><div class="t" style="right:652.40px;top:227.33px;font-size:6.3px;line-height:7.56px;color:#3a3a3a;transform:scaleX(0.74);transform-origin:100% 0;">2025.04.20 18:13:30</div><div class="t" style="right:609.80px;top:227.33px;font-size:6.3px;line-height:7.56px;color:#3a3a3a;transform:scaleX(0.82);transform-origin:100% 0;">buy</div><div class="t" style="right:575.50px;top:227.33px;font-size:6.3px;line-height:7.56px;color:#3a3a3a;transform:scaleX(0.74);transform-origin:100% 0;">71.47</div><div class="t" style="right:532.80px;top:227.33px;font-size:6.3px;line-height:7.56px;color:#3a3a3a;transform:scaleX(0.82);transform-origin:100% 0;-webkit-text-stroke:0.15px currentColor">btcusdp</div><div class="t" style="right:490.00px;top:227.33px;font-size:6.3px;line-height:7.56px;color:#3a3a3a;transform:scaleX(0.74);transform-origin:100% 0;">84484.80</div><div class="t" style="right:448.00px;top:227.33px;font-size:6.3px;line-height:7.56px;color:#3a3a3a;transform:scaleX(0.74);transform-origin:100% 0;">84484.50</div><div class="t" style="right:404.20px;top:227.33px;font-size:6.3px;line-height:7.56px;color:#3a3a3a;transform:scaleX(0.74);transform-origin:100% 0;">85088.31</div><div class="t" style="right:310.50px;top:227.33px;font-size:6.3px;line-height:7.56px;color:#3a3a3a;transform:scaleX(0.74);transform-origin:100% 0;">2025.04.20 18:13:40</div><div class="t" style="right:268.50px;top:227.33px;font-size:6.3px;line-height:7.56px;color:#3a3a3a;transform:scaleX(0.74);transform-origin:100% 0;">84484.50</div><div class="t" style="right:224.00px;top:227.33px;font-size:6.3px;line-height:7.56px;color:#3a3a3a;transform:scaleX(0.74);transform-origin:100% 0;">-285.88</div><div class="t" style="right:181.80px;top:227.33px;font-size:6.3px;line-height:7.56px;color:#3a3a3a;transform:scaleX(0.74);transform-origin:100% 0;">0.00</div><div class="t" style="right:134.30px;top:227.33px;font-size:6.3px;line-height:7.56px;color:#3a3a3a;transform:scaleX(0.74);transform-origin:100% 0;">-21.44</div><div class="t" style="right:4.00px;top:227.33px;font-size:6.3px;line-height:7.56px;color:#3a3a3a;transform:scaleX(0.82);transform-origin:100% 0;">memberforex.com[sl]</div><div style="left:0px;top:235px;width:798px;height:9px;background:#0078d7"></div><div style="left:312px;top:235px;width:41.5px;height:9px;background:#ff9f9f;border:1px solid #7a9cc0"></div><div style="left:0;top:235px;width:9px;height:9px"><svg width="9" height="9" style="display:block"><path d="M1.5,1.3 H4.3 L6,3 V7.6 H1.5 Z" fill="#fff" stroke="#ffffff" stroke-width="0.8"/><path d="M4.3,1.3 V3 H6" fill="none" stroke="#ffffff" stroke-width="0.6"/></svg></div><div style="left:9px;top:237px;width:1px;height:4px;background:#ebe6b8"></div><div class="t" style="left:13px;top:235.78px;font-size:6.3px;line-height:7.56px;color:#fff;transform:scaleX(0.74);transform-origin:0 0;">6511133</div><div class="t" style="right:652.40px;top:235.78px;font-size:6.3px;line-height:7.56px;color:#fff;transform:scaleX(0.74);transform-origin:100% 0;">2025.04.20 18:17:05</div><div class="t" style="right:609.80px;top:235.78px;font-size:6.3px;line-height:7.56px;color:#fff;transform:scaleX(0.82);transform-origin:100% 0;">buy</div><div class="t" style="right:575.50px;top:235.78px;font-size:6.3px;line-height:7.56px;color:#fff;transform:scaleX(0.74);transform-origin:100% 0;">71.57</div><div class="t" style="right:532.80px;top:235.78px;font-size:6.3px;line-height:7.56px;color:#fff;transform:scaleX(0.82);transform-origin:100% 0;-webkit-text-stroke:0.15px currentColor">btcusdp</div><div class="t" style="right:490.00px;top:235.78px;font-size:6.3px;line-height:7.56px;color:#fff;transform:scaleX(0.74);transform-origin:100% 0;">84413.20</div><div class="t" style="right:448.00px;top:235.78px;font-size:6.3px;line-height:7.56px;color:#3a3a3a;transform:scaleX(0.74);transform-origin:100% 0;">84448.80</div><div class="t" style="right:404.20px;top:235.78px;font-size:6.3px;line-height:7.56px;color:#fff;transform:scaleX(0.74);transform-origin:100% 0;">85052.61</div><div class="t" style="right:310.50px;top:235.78px;font-size:6.3px;line-height:7.56px;color:#fff;transform:scaleX(0.74);transform-origin:100% 0;">2025.04.20 18:18:24</div><div class="t" style="right:268.50px;top:235.78px;font-size:6.3px;line-height:7.56px;color:#fff;transform:scaleX(0.74);transform-origin:100% 0;">84448.80</div><div class="t" style="right:224.00px;top:235.78px;font-size:6.3px;line-height:7.56px;color:#fff;transform:scaleX(0.74);transform-origin:100% 0;">-286.28</div><div class="t" style="right:181.80px;top:235.78px;font-size:6.3px;line-height:7.56px;color:#fff;transform:scaleX(0.74);transform-origin:100% 0;">0.00</div><div class="t" style="right:134.30px;top:235.78px;font-size:6.3px;line-height:7.56px;color:#fff;transform:scaleX(0.74);transform-origin:100% 0;">2 547.89</div><div class="t" style="right:4.00px;top:235.78px;font-size:6.3px;line-height:7.56px;color:#fff;transform:scaleX(0.82);transform-origin:100% 0;">memberforex.com[sl]</div><div style="left:0px;top:244px;width:798px;height:8px;background:#ebebeb"></div><div style="left:312px;top:244px;width:41.5px;height:8px;background:#ffa0a0"></div><div style="left:312px;top:251px;width:41.5px;height:1px;background:#ffc4c4"></div><div style="left:0;top:244px;width:9px;height:9px"><svg width="9" height="9" style="display:block"><path d="M1.5,1.3 H4.3 L6,3 V7.6 H1.5 Z" fill="#fff" stroke="#7a7a7a" stroke-width="0.8"/><path d="M4.3,1.3 V3 H6" fill="none" stroke="#7a7a7a" stroke-width="0.6"/><circle cx="5.3" cy="6.4" r="1.6" fill="#1f86d8"/></svg></div><div style="left:9px;top:246px;width:1px;height:4px;background:#ebe6b8"></div><div class="t" style="left:13px;top:244.22px;font-size:6.3px;line-height:7.56px;color:#3a3a3a;transform:scaleX(0.74);transform-origin:0 0;">6511134</div><div class="t" style="right:652.40px;top:244.22px;font-size:6.3px;line-height:7.56px;color:#3a3a3a;transform:scaleX(0.74);transform-origin:100% 0;">2025.04.20 18:19:13</div><div class="t" style="right:609.80px;top:244.22px;font-size:6.3px;line-height:7.56px;color:#3a3a3a;transform:scaleX(0.82);transform-origin:100% 0;">buy</div><div class="t" style="right:575.50px;top:244.22px;font-size:6.3px;line-height:7.56px;color:#3a3a3a;transform:scaleX(0.74);transform-origin:100% 0;">71.79</div><div class="t" style="right:532.80px;top:244.22px;font-size:6.3px;line-height:7.56px;color:#3a3a3a;transform:scaleX(0.82);transform-origin:100% 0;-webkit-text-stroke:0.15px currentColor">btcusdp</div><div class="t" style="right:490.00px;top:244.22px;font-size:6.3px;line-height:7.56px;color:#3a3a3a;transform:scaleX(0.74);transform-origin:100% 0;">84376.10</div><div class="t" style="right:448.00px;top:244.22px;font-size:6.3px;line-height:7.56px;color:#3a3a3a;transform:scaleX(0.74);transform-origin:100% 0;">84403.30</div><div class="t" style="right:404.20px;top:244.22px;font-size:6.3px;line-height:7.56px;color:#3a3a3a;transform:scaleX(0.74);transform-origin:100% 0;">85007.11</div><div class="t" style="right:310.50px;top:244.22px;font-size:6.3px;line-height:7.56px;color:#3a3a3a;transform:scaleX(0.74);transform-origin:100% 0;">2025.04.20 18:19:45</div><div class="t" style="right:268.50px;top:244.22px;font-size:6.3px;line-height:7.56px;color:#3a3a3a;transform:scaleX(0.74);transform-origin:100% 0;">84403.30</div><div class="t" style="right:224.00px;top:244.22px;font-size:6.3px;line-height:7.56px;color:#3a3a3a;transform:scaleX(0.74);transform-origin:100% 0;">-287.16</div><div class="t" style="right:181.80px;top:244.22px;font-size:6.3px;line-height:7.56px;color:#3a3a3a;transform:scaleX(0.74);transform-origin:100% 0;">0.00</div><div class="t" style="right:134.30px;top:244.22px;font-size:6.3px;line-height:7.56px;color:#3a3a3a;transform:scaleX(0.74);transform-origin:100% 0;">1 952.69</div><div class="t" style="right:4.00px;top:244.22px;font-size:6.3px;line-height:7.56px;color:#3a3a3a;transform:scaleX(0.82);transform-origin:100% 0;">memberforex.com[sl]</div><div style="left:0px;top:252px;width:798px;height:9px;background:#ffffff"></div><div style="left:312px;top:252px;width:41.5px;height:9px;background:#ffa0a0"></div><div style="left:312px;top:260px;width:41.5px;height:1px;background:#ffc4c4"></div><div style="left:0;top:252px;width:9px;height:9px"><svg width="9" height="9" style="display:block"><path d="M1.5,1.3 H4.3 L6,3 V7.6 H1.5 Z" fill="#fff" stroke="#7a7a7a" stroke-width="0.8"/><path d="M4.3,1.3 V3 H6" fill="none" stroke="#7a7a7a" stroke-width="0.6"/><circle cx="5.3" cy="6.4" r="1.6" fill="#1f86d8"/></svg></div><div style="left:9px;top:254px;width:1px;height:4px;background:#ebe6b8"></div><div class="t" style="left:13px;top:252.67px;font-size:6.3px;line-height:7.56px;color:#3a3a3a;transform:scaleX(0.74);transform-origin:0 0;">6511134</div><div class="t" style="right:652.40px;top:252.67px;font-size:6.3px;line-height:7.56px;color:#3a3a3a;transform:scaleX(0.74);transform-origin:100% 0;">2025.04.20 18:20:16</div><div class="t" style="right:609.80px;top:252.67px;font-size:6.3px;line-height:7.56px;color:#3a3a3a;transform:scaleX(0.82);transform-origin:100% 0;">buy</div><div class="t" style="right:575.50px;top:252.67px;font-size:6.3px;line-height:7.56px;color:#3a3a3a;transform:scaleX(0.74);transform-origin:100% 0;">71.95</div><div class="t" style="right:532.80px;top:252.67px;font-size:6.3px;line-height:7.56px;color:#3a3a3a;transform:scaleX(0.82);transform-origin:100% 0;-webkit-text-stroke:0.15px currentColor">btcusdp</div><div class="t" style="right:490.00px;top:252.67px;font-size:6.3px;line-height:7.56px;color:#3a3a3a;transform:scaleX(0.74);transform-origin:100% 0;">84375.10</div><div class="t" style="right:448.00px;top:252.67px;font-size:6.3px;line-height:7.56px;color:#3a3a3a;transform:scaleX(0.74);transform-origin:100% 0;">84385.70</div><div class="t" style="right:404.20px;top:252.67px;font-size:6.3px;line-height:7.56px;color:#3a3a3a;transform:scaleX(0.74);transform-origin:100% 0;">84989.51</div><div class="t" style="right:310.50px;top:252.67px;font-size:6.3px;line-height:7.56px;color:#3a3a3a;transform:scaleX(0.74);transform-origin:100% 0;">2025.04.20 18:20:21</div><div class="t" style="right:268.50px;top:252.67px;font-size:6.3px;line-height:7.56px;color:#3a3a3a;transform:scaleX(0.74);transform-origin:100% 0;">84385.70</div><div class="t" style="right:224.00px;top:252.67px;font-size:6.3px;line-height:7.56px;color:#3a3a3a;transform:scaleX(0.74);transform-origin:100% 0;">-287.80</div><div class="t" style="right:181.80px;top:252.67px;font-size:6.3px;line-height:7.56px;color:#3a3a3a;transform:scaleX(0.74);transform-origin:100% 0;">0.00</div><div class="t" style="right:134.30px;top:252.67px;font-size:6.3px;line-height:7.56px;color:#3a3a3a;transform:scaleX(0.74);transform-origin:100% 0;">762.67</div><div class="t" style="right:4.00px;top:252.67px;font-size:6.3px;line-height:7.56px;color:#3a3a3a;transform:scaleX(0.82);transform-origin:100% 0;">memberforex.com[sl]</div><div style="left:0px;top:261px;width:798px;height:8px;background:#ebebeb"></div><div style="left:312px;top:261px;width:41.5px;height:8px;background:#ffa0a0"></div><div style="left:312px;top:268px;width:41.5px;height:1px;background:#ffc4c4"></div><div style="left:0;top:261px;width:9px;height:9px"><svg width="9" height="9" style="display:block"><path d="M1.5,1.3 H4.3 L6,3 V7.6 H1.5 Z" fill="#fff" stroke="#7a7a7a" stroke-width="0.8"/><path d="M4.3,1.3 V3 H6" fill="none" stroke="#7a7a7a" stroke-width="0.6"/><circle cx="5.3" cy="6.4" r="1.6" fill="#1f86d8"/></svg></div><div style="left:9px;top:263px;width:1px;height:4px;background:#ebe6b8"></div><div class="t" style="left:13px;top:261.11px;font-size:6.3px;line-height:7.56px;color:#3a3a3a;transform:scaleX(0.74);transform-origin:0 0;">6511135</div><div class="t" style="right:652.40px;top:261.11px;font-size:6.3px;line-height:7.56px;color:#3a3a3a;transform:scaleX(0.74);transform-origin:100% 0;">2025.04.20 18:20:33</div><div class="t" style="right:609.80px;top:261.11px;font-size:6.3px;line-height:7.56px;color:#3a3a3a;transform:scaleX(0.82);transform-origin:100% 0;">buy</div><div class="t" style="right:575.50px;top:261.11px;font-size:6.3px;line-height:7.56px;color:#3a3a3a;transform:scaleX(0.74);transform-origin:100% 0;">72.00</div><div class="t" style="right:532.80px;top:261.11px;font-size:6.3px;line-height:7.56px;color:#3a3a3a;transform:scaleX(0.82);transform-origin:100% 0;-webkit-text-stroke:0.15px currentColor">btcusdp</div><div class="t" style="right:490.00px;top:261.11px;font-size:6.3px;line-height:7.56px;color:#3a3a3a;transform:scaleX(0.74);transform-origin:100% 0;">84379.60</div><div class="t" style="right:448.00px;top:261.11px;font-size:6.3px;line-height:7.56px;color:#3a3a3a;transform:scaleX(0.74);transform-origin:100% 0;">84392.40</div><div class="t" style="right:404.20px;top:261.11px;font-size:6.3px;line-height:7.56px;color:#3a3a3a;transform:scaleX(0.74);transform-origin:100% 0;">84996.21</div><div class="t" style="right:310.50px;top:261.11px;font-size:6.3px;line-height:7.56px;color:#3a3a3a;transform:scaleX(0.74);transform-origin:100% 0;">2025.04.20 18:22:05</div><div class="t" style="right:268.50px;top:261.11px;font-size:6.3px;line-height:7.56px;color:#3a3a3a;transform:scaleX(0.74);transform-origin:100% 0;">84392.40</div><div class="t" style="right:224.00px;top:261.11px;font-size:6.3px;line-height:7.56px;color:#3a3a3a;transform:scaleX(0.74);transform-origin:100% 0;">-288.00</div><div class="t" style="right:181.80px;top:261.11px;font-size:6.3px;line-height:7.56px;color:#3a3a3a;transform:scaleX(0.74);transform-origin:100% 0;">0.00</div><div class="t" style="right:134.30px;top:261.11px;font-size:6.3px;line-height:7.56px;color:#3a3a3a;transform:scaleX(0.74);transform-origin:100% 0;">921.60</div><div class="t" style="right:4.00px;top:261.11px;font-size:6.3px;line-height:7.56px;color:#3a3a3a;transform:scaleX(0.82);transform-origin:100% 0;">memberforex.com[sl]</div><div style="left:0px;top:269px;width:798px;height:8px;background:#ffffff"></div><div style="left:312px;top:269px;width:41.5px;height:8px;background:#ffa0a0"></div><div style="left:312px;top:276px;width:41.5px;height:1px;background:#ffc4c4"></div><div style="left:0;top:269px;width:9px;height:9px"><svg width="9" height="9" style="display:block"><path d="M1.5,1.3 H4.3 L6,3 V7.6 H1.5 Z" fill="#fff" stroke="#7a7a7a" stroke-width="0.8"/><path d="M4.3,1.3 V3 H6" fill="none" stroke="#7a7a7a" stroke-width="0.6"/><circle cx="5.3" cy="6.4" r="1.6" fill="#1f86d8"/></svg></div><div style="left:9px;top:271px;width:1px;height:4px;background:#ebe6b8"></div><div class="t" style="left:13px;top:269.56px;font-size:6.3px;line-height:7.56px;color:#3a3a3a;transform:scaleX(0.74);transform-origin:0 0;">6511135</div><div class="t" style="right:652.40px;top:269.56px;font-size:6.3px;line-height:7.56px;color:#3a3a3a;transform:scaleX(0.74);transform-origin:100% 0;">2025.04.20 18:22:27</div><div class="t" style="right:609.80px;top:269.56px;font-size:6.3px;line-height:7.56px;color:#3a3a3a;transform:scaleX(0.82);transform-origin:100% 0;">buy</div><div class="t" style="right:575.50px;top:269.56px;font-size:6.3px;line-height:7.56px;color:#3a3a3a;transform:scaleX(0.74);transform-origin:100% 0;">72.06</div><div class="t" style="right:532.80px;top:269.56px;font-size:6.3px;line-height:7.56px;color:#3a3a3a;transform:scaleX(0.82);transform-origin:100% 0;-webkit-text-stroke:0.15px currentColor">btcusdp</div><div class="t" style="right:490.00px;top:269.56px;font-size:6.3px;line-height:7.56px;color:#3a3a3a;transform:scaleX(0.74);transform-origin:100% 0;">84367.70</div><div class="t" style="right:448.00px;top:269.56px;font-size:6.3px;line-height:7.56px;color:#3a3a3a;transform:scaleX(0.74);transform-origin:100% 0;">84415.00</div><div class="t" style="right:404.20px;top:269.56px;font-size:6.3px;line-height:7.56px;color:#3a3a3a;transform:scaleX(0.74);transform-origin:100% 0;">85018.81</div><div class="t" style="right:310.50px;top:269.56px;font-size:6.3px;line-height:7.56px;color:#3a3a3a;transform:scaleX(0.74);transform-origin:100% 0;">2025.04.20 18:23:26</div><div class="t" style="right:268.50px;top:269.56px;font-size:6.3px;line-height:7.56px;color:#3a3a3a;transform:scaleX(0.74);transform-origin:100% 0;">84415.00</div><div class="t" style="right:224.00px;top:269.56px;font-size:6.3px;line-height:7.56px;color:#3a3a3a;transform:scaleX(0.74);transform-origin:100% 0;">-288.24</div><div class="t" style="right:181.80px;top:269.56px;font-size:6.3px;line-height:7.56px;color:#3a3a3a;transform:scaleX(0.74);transform-origin:100% 0;">0.00</div><div class="t" style="right:134.30px;top:269.56px;font-size:6.3px;line-height:7.56px;color:#3a3a3a;transform:scaleX(0.74);transform-origin:100% 0;">2 408.44</div><div class="t" style="right:4.00px;top:269.56px;font-size:6.3px;line-height:7.56px;color:#3a3a3a;transform:scaleX(0.82);transform-origin:100% 0;">memberforex.com[sl]</div><div style="left:0px;top:277px;width:798px;height:9px;background:#ebebeb"></div><div style="left:312px;top:277px;width:41.5px;height:9px;background:#ffa0a0"></div><div style="left:312px;top:285px;width:41.5px;height:1px;background:#ffc4c4"></div><div style="left:0;top:277px;width:9px;height:9px"><svg width="9" height="9" style="display:block"><path d="M1.5,1.3 H4.3 L6,3 V7.6 H1.5 Z" fill="#fff" stroke="#7a7a7a" stroke-width="0.8"/><path d="M4.3,1.3 V3 H6" fill="none" stroke="#7a7a7a" stroke-width="0.6"/><circle cx="5.3" cy="6.4" r="1.6" fill="#1f86d8"/></svg></div><div style="left:9px;top:279px;width:1px;height:4px;background:#ebe6b8"></div><div class="t" style="left:13px;top:278.00px;font-size:6.3px;line-height:7.56px;color:#3a3a3a;transform:scaleX(0.74);transform-origin:0 0;">6511135</div><div class="t" style="right:652.40px;top:278.00px;font-size:6.3px;line-height:7.56px;color:#3a3a3a;transform:scaleX(0.74);transform-origin:100% 0;">2025.04.20 18:22:09</div><div class="t" style="right:609.80px;top:278.00px;font-size:6.3px;line-height:7.56px;color:#3a3a3a;transform:scaleX(0.82);transform-origin:100% 0;">buy</div><div class="t" style="right:575.50px;top:278.00px;font-size:6.3px;line-height:7.56px;color:#3a3a3a;transform:scaleX(0.74);transform-origin:100% 0;">72.06</div><div class="t" style="right:532.80px;top:278.00px;font-size:6.3px;line-height:7.56px;color:#3a3a3a;transform:scaleX(0.82);transform-origin:100% 0;-webkit-text-stroke:0.15px currentColor">btcusdp</div><div class="t" style="right:490.00px;top:278.00px;font-size:6.3px;line-height:7.56px;color:#3a3a3a;transform:scaleX(0.74);transform-origin:100% 0;">84372.80</div><div class="t" style="right:448.00px;top:278.00px;font-size:6.3px;line-height:7.56px;color:#3a3a3a;transform:scaleX(0.74);transform-origin:100% 0;">84377.10</div><div class="t" style="right:404.20px;top:278.00px;font-size:6.3px;line-height:7.56px;color:#3a3a3a;transform:scaleX(0.74);transform-origin:100% 0;">84980.91</div><div class="t" style="right:310.50px;top:278.00px;font-size:6.3px;line-height:7.56px;color:#3a3a3a;transform:scaleX(0.74);transform-origin:100% 0;">2025.04.20 18:22:15</div><div class="t" style="right:268.50px;top:278.00px;font-size:6.3px;line-height:7.56px;color:#3a3a3a;transform:scaleX(0.74);transform-origin:100% 0;">84377.10</div><div class="t" style="right:224.00px;top:278.00px;font-size:6.3px;line-height:7.56px;color:#3a3a3a;transform:scaleX(0.74);transform-origin:100% 0;">-288.24</div><div class="t" style="right:181.80px;top:278.00px;font-size:6.3px;line-height:7.56px;color:#3a3a3a;transform:scaleX(0.74);transform-origin:100% 0;">0.00</div><div class="t" style="right:134.30px;top:278.00px;font-size:6.3px;line-height:7.56px;color:#3a3a3a;transform:scaleX(0.74);transform-origin:100% 0;">308.86</div><div class="t" style="right:4.00px;top:278.00px;font-size:6.3px;line-height:7.56px;color:#3a3a3a;transform:scaleX(0.82);transform-origin:100% 0;">memberforex.com[sl]</div><div style="left:0px;top:286px;width:798px;height:8px;background:#ffffff"></div><div style="left:312px;top:286px;width:41.5px;height:8px;background:#ffa0a0"></div><div style="left:312px;top:293px;width:41.5px;height:1px;background:#ffc4c4"></div><div style="left:0;top:286px;width:9px;height:9px"><svg width="9" height="9" style="display:block"><path d="M1.5,1.3 H4.3 L6,3 V7.6 H1.5 Z" fill="#fff" stroke="#7a7a7a" stroke-width="0.8"/><path d="M4.3,1.3 V3 H6" fill="none" stroke="#7a7a7a" stroke-width="0.6"/><circle cx="5.3" cy="6.4" r="1.6" fill="#1f86d8"/></svg></div><div style="left:9px;top:288px;width:1px;height:4px;background:#ebe6b8"></div><div class="t" style="left:13px;top:286.45px;font-size:6.3px;line-height:7.56px;color:#3a3a3a;transform:scaleX(0.74);transform-origin:0 0;">6511135</div><div class="t" style="right:652.40px;top:286.45px;font-size:6.3px;line-height:7.56px;color:#3a3a3a;transform:scaleX(0.74);transform-origin:100% 0;">2025.04.20 18:25:28</div><div class="t" style="right:609.80px;top:286.45px;font-size:6.3px;line-height:7.56px;color:#3a3a3a;transform:scaleX(0.82);transform-origin:100% 0;">buy</div><div class="t" style="right:575.50px;top:286.45px;font-size:6.3px;line-height:7.56px;color:#3a3a3a;transform:scaleX(0.74);transform-origin:100% 0;">72.37</div><div class="t" style="right:532.80px;top:286.45px;font-size:6.3px;line-height:7.56px;color:#3a3a3a;transform:scaleX(0.82);transform-origin:100% 0;-webkit-text-stroke:0.15px currentColor">btcusdp</div><div class="t" style="right:490.00px;top:286.45px;font-size:6.3px;line-height:7.56px;color:#3a3a3a;transform:scaleX(0.74);transform-origin:100% 0;">84360.00</div><div class="t" style="right:448.00px;top:286.45px;font-size:6.3px;line-height:7.56px;color:#3a3a3a;transform:scaleX(0.74);transform-origin:100% 0;">84379.40</div><div class="t" style="right:404.20px;top:286.45px;font-size:6.3px;line-height:7.56px;color:#3a3a3a;transform:scaleX(0.74);transform-origin:100% 0;">84983.21</div><div class="t" style="right:310.50px;top:286.45px;font-size:6.3px;line-height:7.56px;color:#3a3a3a;transform:scaleX(0.74);transform-origin:100% 0;">2025.04.20 18:25:38</div><div class="t" style="right:268.50px;top:286.45px;font-size:6.3px;line-height:7.56px;color:#3a3a3a;transform:scaleX(0.74);transform-origin:100% 0;">84379.40</div><div class="t" style="right:224.00px;top:286.45px;font-size:6.3px;line-height:7.56px;color:#3a3a3a;transform:scaleX(0.74);transform-origin:100% 0;">-289.48</div><div class="t" style="right:181.80px;top:286.45px;font-size:6.3px;line-height:7.56px;color:#3a3a3a;transform:scaleX(0.74);transform-origin:100% 0;">0.00</div><div class="t" style="right:134.30px;top:286.45px;font-size:6.3px;line-height:7.56px;color:#3a3a3a;transform:scaleX(0.74);transform-origin:100% 0;">1 403.98</div><div class="t" style="right:4.00px;top:286.45px;font-size:6.3px;line-height:7.56px;color:#3a3a3a;transform:scaleX(0.82);transform-origin:100% 0;">memberforex.com[sl]</div><div style="left:0px;top:294px;width:798px;height:9px;background:#ebebeb"></div><div style="left:312px;top:294px;width:41.5px;height:9px;background:#ffa0a0"></div><div style="left:312px;top:302px;width:41.5px;height:1px;background:#ffc4c4"></div><div style="left:0;top:294px;width:9px;height:9px"><svg width="9" height="9" style="display:block"><path d="M1.5,1.3 H4.3 L6,3 V7.6 H1.5 Z" fill="#fff" stroke="#7a7a7a" stroke-width="0.8"/><path d="M4.3,1.3 V3 H6" fill="none" stroke="#7a7a7a" stroke-width="0.6"/><circle cx="5.3" cy="6.4" r="1.6" fill="#1f86d8"/></svg></div><div style="left:9px;top:296px;width:1px;height:4px;background:#ebe6b8"></div><div class="t" style="left:13px;top:294.89px;font-size:6.3px;line-height:7.56px;color:#3a3a3a;transform:scaleX(0.74);transform-origin:0 0;">6511136</div><div class="t" style="right:652.40px;top:294.89px;font-size:6.3px;line-height:7.56px;color:#3a3a3a;transform:scaleX(0.74);transform-origin:100% 0;">2025.04.20 18:26:19</div><div class="t" style="right:609.80px;top:294.89px;font-size:6.3px;line-height:7.56px;color:#3a3a3a;transform:scaleX(0.82);transform-origin:100% 0;">buy</div><div class="t" style="right:575.50px;top:294.89px;font-size:6.3px;line-height:7.56px;color:#3a3a3a;transform:scaleX(0.74);transform-origin:100% 0;">72.48</div><div class="t" style="right:532.80px;top:294.89px;font-size:6.3px;line-height:7.56px;color:#3a3a3a;transform:scaleX(0.82);transform-origin:100% 0;-webkit-text-stroke:0.15px currentColor">btcusdp</div><div class="t" style="right:490.00px;top:294.89px;font-size:6.3px;line-height:7.56px;color:#3a3a3a;transform:scaleX(0.74);transform-origin:100% 0;">84366.50</div><div class="t" style="right:448.00px;top:294.89px;font-size:6.3px;line-height:7.56px;color:#3a3a3a;transform:scaleX(0.74);transform-origin:100% 0;">84388.90</div><div class="t" style="right:404.20px;top:294.89px;font-size:6.3px;line-height:7.56px;color:#3a3a3a;transform:scaleX(0.74);transform-origin:100% 0;">84992.71</div><div class="t" style="right:310.50px;top:294.89px;font-size:6.3px;line-height:7.56px;color:#3a3a3a;transform:scaleX(0.74);transform-origin:100% 0;">2025.04.20 18:28:04</div><div class="t" style="right:268.50px;top:294.89px;font-size:6.3px;line-height:7.56px;color:#3a3a3a;transform:scaleX(0.74);transform-origin:100% 0;">84388.90</div><div class="t" style="right:224.00px;top:294.89px;font-size:6.3px;line-height:7.56px;color:#3a3a3a;transform:scaleX(0.74);transform-origin:100% 0;">-289.92</div><div class="t" style="right:181.80px;top:294.89px;font-size:6.3px;line-height:7.56px;color:#3a3a3a;transform:scaleX(0.74);transform-origin:100% 0;">0.00</div><div class="t" style="right:134.30px;top:294.89px;font-size:6.3px;line-height:7.56px;color:#3a3a3a;transform:scaleX(0.74);transform-origin:100% 0;">1 623.55</div><div class="t" style="right:4.00px;top:294.89px;font-size:6.3px;line-height:7.56px;color:#3a3a3a;transform:scaleX(0.82);transform-origin:100% 0;">memberforex.com[sl]</div><div style="left:0px;top:303px;width:798px;height:8px;background:#ffffff"></div><div style="left:312px;top:303px;width:41.5px;height:8px;background:#ffa0a0"></div><div style="left:312px;top:310px;width:41.5px;height:1px;background:#ffc4c4"></div><div style="left:0;top:303px;width:9px;height:9px"><svg width="9" height="9" style="display:block"><path d="M1.5,1.3 H4.3 L6,3 V7.6 H1.5 Z" fill="#fff" stroke="#7a7a7a" stroke-width="0.8"/><path d="M4.3,1.3 V3 H6" fill="none" stroke="#7a7a7a" stroke-width="0.6"/><circle cx="5.3" cy="6.4" r="1.6" fill="#1f86d8"/></svg></div><div style="left:9px;top:305px;width:1px;height:4px;background:#ebe6b8"></div><div class="t" style="left:13px;top:303.34px;font-size:6.3px;line-height:7.56px;color:#3a3a3a;transform:scaleX(0.74);transform-origin:0 0;">6511140</div><div class="t" style="right:652.40px;top:303.34px;font-size:6.3px;line-height:7.56px;color:#3a3a3a;transform:scaleX(0.74);transform-origin:100% 0;">2025.04.20 18:51:01</div><div class="t" style="right:609.80px;top:303.34px;font-size:6.3px;line-height:7.56px;color:#3a3a3a;transform:scaleX(0.82);transform-origin:100% 0;">buy</div><div class="t" style="right:575.50px;top:303.34px;font-size:6.3px;line-height:7.56px;color:#3a3a3a;transform:scaleX(0.74);transform-origin:100% 0;">72.52</div><div class="t" style="right:532.80px;top:303.34px;font-size:6.3px;line-height:7.56px;color:#3a3a3a;transform:scaleX(0.82);transform-origin:100% 0;-webkit-text-stroke:0.15px currentColor">btcusdp</div><div class="t" style="right:490.00px;top:303.34px;font-size:6.3px;line-height:7.56px;color:#3a3a3a;transform:scaleX(0.74);transform-origin:100% 0;">84283.20</div><div class="t" style="right:448.00px;top:303.34px;font-size:6.3px;line-height:7.56px;color:#3a3a3a;transform:scaleX(0.74);transform-origin:100% 0;">84304.20</div><div class="t" style="right:404.20px;top:303.34px;font-size:6.3px;line-height:7.56px;color:#3a3a3a;transform:scaleX(0.74);transform-origin:100% 0;">84908.01</div><div class="t" style="right:310.50px;top:303.34px;font-size:6.3px;line-height:7.56px;color:#3a3a3a;transform:scaleX(0.74);transform-origin:100% 0;">2025.04.20 18:51:13</div><div class="t" style="right:268.50px;top:303.34px;font-size:6.3px;line-height:7.56px;color:#3a3a3a;transform:scaleX(0.74);transform-origin:100% 0;">84304.20</div><div class="t" style="right:224.00px;top:303.34px;font-size:6.3px;line-height:7.56px;color:#3a3a3a;transform:scaleX(0.74);transform-origin:100% 0;">-290.08</div><div class="t" style="right:181.80px;top:303.34px;font-size:6.3px;line-height:7.56px;color:#3a3a3a;transform:scaleX(0.74);transform-origin:100% 0;">0.00</div><div class="t" style="right:134.30px;top:303.34px;font-size:6.3px;line-height:7.56px;color:#3a3a3a;transform:scaleX(0.74);transform-origin:100% 0;">1 522.92</div><div class="t" style="right:4.00px;top:303.34px;font-size:6.3px;line-height:7.56px;color:#3a3a3a;transform:scaleX(0.82);transform-origin:100% 0;">memberforex.com[sl]</div><div style="left:0px;top:311px;width:798px;height:9px;background:#ebebeb"></div><div style="left:312px;top:311px;width:41.5px;height:9px;background:#ffa0a0"></div><div style="left:312px;top:319px;width:41.5px;height:1px;background:#ffc4c4"></div><div style="left:0;top:311px;width:9px;height:9px"><svg width="9" height="9" style="display:block"><path d="M1.5,1.3 H4.3 L6,3 V7.6 H1.5 Z" fill="#fff" stroke="#7a7a7a" stroke-width="0.8"/><path d="M4.3,1.3 V3 H6" fill="none" stroke="#7a7a7a" stroke-width="0.6"/><circle cx="5.3" cy="6.4" r="1.6" fill="#1f86d8"/></svg></div><div style="left:9px;top:313px;width:1px;height:4px;background:#ebe6b8"></div><div class="t" style="left:13px;top:311.78px;font-size:6.3px;line-height:7.56px;color:#3a3a3a;transform:scaleX(0.74);transform-origin:0 0;">6511137</div><div class="t" style="right:652.40px;top:311.78px;font-size:6.3px;line-height:7.56px;color:#3a3a3a;transform:scaleX(0.74);transform-origin:100% 0;">2025.04.20 18:28:29</div><div class="t" style="right:609.80px;top:311.78px;font-size:6.3px;line-height:7.56px;color:#3a3a3a;transform:scaleX(0.82);transform-origin:100% 0;">buy</div><div class="t" style="right:575.50px;top:311.78px;font-size:6.3px;line-height:7.56px;color:#3a3a3a;transform:scaleX(0.74);transform-origin:100% 0;">72.58</div><div class="t" style="right:532.80px;top:311.78px;font-size:6.3px;line-height:7.56px;color:#3a3a3a;transform:scaleX(0.82);transform-origin:100% 0;-webkit-text-stroke:0.15px currentColor">btcusdp</div><div class="t" style="right:490.00px;top:311.78px;font-size:6.3px;line-height:7.56px;color:#3a3a3a;transform:scaleX(0.74);transform-origin:100% 0;">84306.20</div><div class="t" style="right:448.00px;top:311.78px;font-size:6.3px;line-height:7.56px;color:#3a3a3a;transform:scaleX(0.74);transform-origin:100% 0;">84302.40</div><div class="t" style="right:404.20px;top:311.78px;font-size:6.3px;line-height:7.56px;color:#3a3a3a;transform:scaleX(0.74);transform-origin:100% 0;">84906.21</div><div class="t" style="right:310.50px;top:311.78px;font-size:6.3px;line-height:7.56px;color:#3a3a3a;transform:scaleX(0.74);transform-origin:100% 0;">2025.04.20 18:50:33</div><div class="t" style="right:268.50px;top:311.78px;font-size:6.3px;line-height:7.56px;color:#3a3a3a;transform:scaleX(0.74);transform-origin:100% 0;">84302.40</div><div class="t" style="right:224.00px;top:311.78px;font-size:6.3px;line-height:7.56px;color:#3a3a3a;transform:scaleX(0.74);transform-origin:100% 0;">-290.32</div><div class="t" style="right:181.80px;top:311.78px;font-size:6.3px;line-height:7.56px;color:#3a3a3a;transform:scaleX(0.74);transform-origin:100% 0;">0.00</div><div class="t" style="right:134.30px;top:311.78px;font-size:6.3px;line-height:7.56px;color:#3a3a3a;transform:scaleX(0.74);transform-origin:100% 0;">-275.80</div><div class="t" style="right:4.00px;top:311.78px;font-size:6.3px;line-height:7.56px;color:#3a3a3a;transform:scaleX(0.82);transform-origin:100% 0;">memberforex.com[sl]</div><div style="left:0px;top:320px;width:798px;height:8px;background:#ffffff"></div><div style="left:312px;top:320px;width:41.5px;height:8px;background:#ffa0a0"></div><div style="left:312px;top:327px;width:41.5px;height:1px;background:#ffc4c4"></div><div style="left:0;top:320px;width:9px;height:9px"><svg width="9" height="9" style="display:block"><path d="M1.5,1.3 H4.3 L6,3 V7.6 H1.5 Z" fill="#fff" stroke="#7a7a7a" stroke-width="0.8"/><path d="M4.3,1.3 V3 H6" fill="none" stroke="#7a7a7a" stroke-width="0.6"/><circle cx="5.3" cy="6.4" r="1.6" fill="#1f86d8"/></svg></div><div style="left:9px;top:322px;width:1px;height:4px;background:#ebe6b8"></div><div class="t" style="left:13px;top:320.23px;font-size:6.3px;line-height:7.56px;color:#3a3a3a;transform:scaleX(0.74);transform-origin:0 0;">6511137</div><div class="t" style="right:652.40px;top:320.23px;font-size:6.3px;line-height:7.56px;color:#3a3a3a;transform:scaleX(0.74);transform-origin:100% 0;">2025.04.20 18:28:22</div><div class="t" style="right:609.80px;top:320.23px;font-size:6.3px;line-height:7.56px;color:#3a3a3a;transform:scaleX(0.82);transform-origin:100% 0;">buy</div><div class="t" style="right:575.50px;top:320.23px;font-size:6.3px;line-height:7.56px;color:#3a3a3a;transform:scaleX(0.74);transform-origin:100% 0;">72.61</div><div class="t" style="right:532.80px;top:320.23px;font-size:6.3px;line-height:7.56px;color:#3a3a3a;transform:scaleX(0.82);transform-origin:100% 0;-webkit-text-stroke:0.15px currentColor">btcusdp</div><div class="t" style="right:490.00px;top:320.23px;font-size:6.3px;line-height:7.56px;color:#3a3a3a;transform:scaleX(0.74);transform-origin:100% 0;">84321.60</div><div class="t" style="right:448.00px;top:320.23px;font-size:6.3px;line-height:7.56px;color:#3a3a3a;transform:scaleX(0.74);transform-origin:100% 0;">84321.20</div><div class="t" style="right:404.20px;top:320.23px;font-size:6.3px;line-height:7.56px;color:#3a3a3a;transform:scaleX(0.74);transform-origin:100% 0;">84925.01</div><div class="t" style="right:310.50px;top:320.23px;font-size:6.3px;line-height:7.56px;color:#3a3a3a;transform:scaleX(0.74);transform-origin:100% 0;">2025.04.20 18:28:23</div><div class="t" style="right:268.50px;top:320.23px;font-size:6.3px;line-height:7.56px;color:#3a3a3a;transform:scaleX(0.74);transform-origin:100% 0;">84321.20</div><div class="t" style="right:224.00px;top:320.23px;font-size:6.3px;line-height:7.56px;color:#3a3a3a;transform:scaleX(0.74);transform-origin:100% 0;">-290.44</div><div class="t" style="right:181.80px;top:320.23px;font-size:6.3px;line-height:7.56px;color:#3a3a3a;transform:scaleX(0.74);transform-origin:100% 0;">0.00</div><div class="t" style="right:134.30px;top:320.23px;font-size:6.3px;line-height:7.56px;color:#3a3a3a;transform:scaleX(0.74);transform-origin:100% 0;">-29.04</div><div class="t" style="right:4.00px;top:320.23px;font-size:6.3px;line-height:7.56px;color:#3a3a3a;transform:scaleX(0.82);transform-origin:100% 0;">memberforex.com[sl]</div><div style="left:0px;top:328px;width:798px;height:9px;background:#ebebeb"></div><div style="left:312px;top:328px;width:41.5px;height:9px;background:#ffa0a0"></div><div style="left:312px;top:336px;width:41.5px;height:1px;background:#ffc4c4"></div><div style="left:0;top:328px;width:9px;height:9px"><svg width="9" height="9" style="display:block"><path d="M1.5,1.3 H4.3 L6,3 V7.6 H1.5 Z" fill="#fff" stroke="#7a7a7a" stroke-width="0.8"/><path d="M4.3,1.3 V3 H6" fill="none" stroke="#7a7a7a" stroke-width="0.6"/><circle cx="5.3" cy="6.4" r="1.6" fill="#1f86d8"/></svg></div><div style="left:9px;top:330px;width:1px;height:4px;background:#ebe6b8"></div><div class="t" style="left:13px;top:328.67px;font-size:6.3px;line-height:7.56px;color:#3a3a3a;transform:scaleX(0.74);transform-origin:0 0;">6511136</div><div class="t" style="right:652.40px;top:328.67px;font-size:6.3px;line-height:7.56px;color:#3a3a3a;transform:scaleX(0.74);transform-origin:100% 0;">2025.04.20 18:28:20</div><div class="t" style="right:609.80px;top:328.67px;font-size:6.3px;line-height:7.56px;color:#3a3a3a;transform:scaleX(0.82);transform-origin:100% 0;">buy</div><div class="t" style="right:575.50px;top:328.67px;font-size:6.3px;line-height:7.56px;color:#3a3a3a;transform:scaleX(0.74);transform-origin:100% 0;">72.61</div><div class="t" style="right:532.80px;top:328.67px;font-size:6.3px;line-height:7.56px;color:#3a3a3a;transform:scaleX(0.82);transform-origin:100% 0;-webkit-text-stroke:0.15px currentColor">btcusdp</div><div class="t" style="right:490.00px;top:328.67px;font-size:6.3px;line-height:7.56px;color:#3a3a3a;transform:scaleX(0.74);transform-origin:100% 0;">84320.70</div><div class="t" style="right:448.00px;top:328.67px;font-size:6.3px;line-height:7.56px;color:#3a3a3a;transform:scaleX(0.74);transform-origin:100% 0;">84324.60</div><div class="t" style="right:404.20px;top:328.67px;font-size:6.3px;line-height:7.56px;color:#3a3a3a;transform:scaleX(0.74);transform-origin:100% 0;">84928.41</div><div class="t" style="right:310.50px;top:328.67px;font-size:6.3px;line-height:7.56px;color:#3a3a3a;transform:scaleX(0.74);transform-origin:100% 0;">2025.04.20 18:28:21</div><div class="t" style="right:268.50px;top:328.67px;font-size:6.3px;line-height:7.56px;color:#3a3a3a;transform:scaleX(0.74);transform-origin:100% 0;">84324.60</div><div class="t" style="right:224.00px;top:328.67px;font-size:6.3px;line-height:7.56px;color:#3a3a3a;transform:scaleX(0.74);transform-origin:100% 0;">-290.44</div><div class="t" style="right:181.80px;top:328.67px;font-size:6.3px;line-height:7.56px;color:#3a3a3a;transform:scaleX(0.74);transform-origin:100% 0;">0.00</div><div class="t" style="right:134.30px;top:328.67px;font-size:6.3px;line-height:7.56px;color:#3a3a3a;transform:scaleX(0.74);transform-origin:100% 0;">283.18</div><div class="t" style="right:4.00px;top:328.67px;font-size:6.3px;line-height:7.56px;color:#3a3a3a;transform:scaleX(0.82);transform-origin:100% 0;">memberforex.com[sl]</div><div style="left:0px;top:337px;width:798px;height:8px;background:#ffffff"></div><div style="left:312px;top:337px;width:41.5px;height:8px;background:#ffa0a0"></div><div style="left:312px;top:344px;width:41.5px;height:1px;background:#ffc4c4"></div><div style="left:0;top:337px;width:9px;height:9px"><svg width="9" height="9" style="display:block"><path d="M1.5,1.3 H4.3 L6,3 V7.6 H1.5 Z" fill="#fff" stroke="#7a7a7a" stroke-width="0.8"/><path d="M4.3,1.3 V3 H6" fill="none" stroke="#7a7a7a" stroke-width="0.6"/><circle cx="5.3" cy="6.4" r="1.6" fill="#1f86d8"/></svg></div><div style="left:9px;top:339px;width:1px;height:4px;background:#ebe6b8"></div><div class="t" style="left:13px;top:337.12px;font-size:6.3px;line-height:7.56px;color:#3a3a3a;transform:scaleX(0.74);transform-origin:0 0;">6511140</div><div class="t" style="right:652.40px;top:337.12px;font-size:6.3px;line-height:7.56px;color:#3a3a3a;transform:scaleX(0.74);transform-origin:100% 0;">2025.04.20 18:52:20</div><div class="t" style="right:609.80px;top:337.12px;font-size:6.3px;line-height:7.56px;color:#3a3a3a;transform:scaleX(0.82);transform-origin:100% 0;">buy</div><div class="t" style="right:575.50px;top:337.12px;font-size:6.3px;line-height:7.56px;color:#3a3a3a;transform:scaleX(0.74);transform-origin:100% 0;">72.64</div><div class="t" style="right:532.80px;top:337.12px;font-size:6.3px;line-height:7.56px;color:#3a3a3a;transform:scaleX(0.82);transform-origin:100% 0;-webkit-text-stroke:0.15px currentColor">btcusdp</div><div class="t" style="right:490.00px;top:337.12px;font-size:6.3px;line-height:7.56px;color:#3a3a3a;transform:scaleX(0.74);transform-origin:100% 0;">84256.10</div><div class="t" style="right:448.00px;top:337.12px;font-size:6.3px;line-height:7.56px;color:#3a3a3a;transform:scaleX(0.74);transform-origin:100% 0;">84279.30</div><div class="t" style="right:404.20px;top:337.12px;font-size:6.3px;line-height:7.56px;color:#3a3a3a;transform:scaleX(0.74);transform-origin:100% 0;">84883.11</div><div class="t" style="right:310.50px;top:337.12px;font-size:6.3px;line-height:7.56px;color:#3a3a3a;transform:scaleX(0.74);transform-origin:100% 0;">2025.04.20 18:53:44</div><div class="t" style="right:268.50px;top:337.12px;font-size:6.3px;line-height:7.56px;color:#3a3a3a;transform:scaleX(0.74);transform-origin:100% 0;">84279.30</div><div class="t" style="right:224.00px;top:337.12px;font-size:6.3px;line-height:7.56px;color:#3a3a3a;transform:scaleX(0.74);transform-origin:100% 0;">-290.56</div><div class="t" style="right:181.80px;top:337.12px;font-size:6.3px;line-height:7.56px;color:#3a3a3a;transform:scaleX(0.74);transform-origin:100% 0;">0.00</div><div class="t" style="right:134.30px;top:337.12px;font-size:6.3px;line-height:7.56px;color:#3a3a3a;transform:scaleX(0.74);transform-origin:100% 0;">1 685.25</div><div class="t" style="right:4.00px;top:337.12px;font-size:6.3px;line-height:7.56px;color:#3a3a3a;transform:scaleX(0.82);transform-origin:100% 0;">memberforex.com[sl]</div><div style="left:0px;top:345px;width:798px;height:8px;background:#ebebeb"></div><div style="left:312px;top:345px;width:41.5px;height:8px;background:#ffa0a0"></div><div style="left:312px;top:352px;width:41.5px;height:1px;background:#ffc4c4"></div><div style="left:0;top:345px;width:9px;height:9px"><svg width="9" height="9" style="display:block"><path d="M1.5,1.3 H4.3 L6,3 V7.6 H1.5 Z" fill="#fff" stroke="#7a7a7a" stroke-width="0.8"/><path d="M4.3,1.3 V3 H6" fill="none" stroke="#7a7a7a" stroke-width="0.6"/><circle cx="5.3" cy="6.4" r="1.6" fill="#1f86d8"/></svg></div><div style="left:9px;top:347px;width:1px;height:4px;background:#ebe6b8"></div><div class="t" style="left:13px;top:345.56px;font-size:6.3px;line-height:7.56px;color:#3a3a3a;transform:scaleX(0.74);transform-origin:0 0;">6511140</div><div class="t" style="right:652.40px;top:345.56px;font-size:6.3px;line-height:7.56px;color:#3a3a3a;transform:scaleX(0.74);transform-origin:100% 0;">2025.04.20 18:54:19</div><div class="t" style="right:609.80px;top:345.56px;font-size:6.3px;line-height:7.56px;color:#3a3a3a;transform:scaleX(0.82);transform-origin:100% 0;">buy</div><div class="t" style="right:575.50px;top:345.56px;font-size:6.3px;line-height:7.56px;color:#3a3a3a;transform:scaleX(0.74);transform-origin:100% 0;">72.73</div><div class="t" style="right:532.80px;top:345.56px;font-size:6.3px;line-height:7.56px;color:#3a3a3a;transform:scaleX(0.82);transform-origin:100% 0;-webkit-text-stroke:0.15px currentColor">btcusdp</div><div class="t" style="right:490.00px;top:345.56px;font-size:6.3px;line-height:7.56px;color:#3a3a3a;transform:scaleX(0.74);transform-origin:100% 0;">84276.60</div><div class="t" style="right:448.00px;top:345.56px;font-size:6.3px;line-height:7.56px;color:#3a3a3a;transform:scaleX(0.74);transform-origin:100% 0;">84286.50</div><div class="t" style="right:404.20px;top:345.56px;font-size:6.3px;line-height:7.56px;color:#3a3a3a;transform:scaleX(0.74);transform-origin:100% 0;">84890.31</div><div class="t" style="right:310.50px;top:345.56px;font-size:6.3px;line-height:7.56px;color:#3a3a3a;transform:scaleX(0.74);transform-origin:100% 0;">2025.04.20 18:54:46</div><div class="t" style="right:268.50px;top:345.56px;font-size:6.3px;line-height:7.56px;color:#3a3a3a;transform:scaleX(0.74);transform-origin:100% 0;">84286.50</div><div class="t" style="right:224.00px;top:345.56px;font-size:6.3px;line-height:7.56px;color:#3a3a3a;transform:scaleX(0.74);transform-origin:100% 0;">-290.92</div><div class="t" style="right:181.80px;top:345.56px;font-size:6.3px;line-height:7.56px;color:#3a3a3a;transform:scaleX(0.74);transform-origin:100% 0;">0.00</div><div class="t" style="right:134.30px;top:345.56px;font-size:6.3px;line-height:7.56px;color:#3a3a3a;transform:scaleX(0.74);transform-origin:100% 0;">720.03</div><div class="t" style="right:4.00px;top:345.56px;font-size:6.3px;line-height:7.56px;color:#3a3a3a;transform:scaleX(0.82);transform-origin:100% 0;">memberforex.com[sl]</div><div style="left:0px;top:353px;width:798px;height:9px;background:#ffffff"></div><div style="left:312px;top:353px;width:41.5px;height:9px;background:#ffa0a0"></div><div style="left:312px;top:361px;width:41.5px;height:1px;background:#ffc4c4"></div><div style="left:0;top:353px;width:9px;height:9px"><svg width="9" height="9" style="display:block"><path d="M1.5,1.3 H4.3 L6,3 V7.6 H1.5 Z" fill="#fff" stroke="#7a7a7a" stroke-width="0.8"/><path d="M4.3,1.3 V3 H6" fill="none" stroke="#7a7a7a" stroke-width="0.6"/><circle cx="5.3" cy="6.4" r="1.6" fill="#1f86d8"/></svg></div><div style="left:9px;top:355px;width:1px;height:4px;background:#ebe6b8"></div><div class="t" style="left:13px;top:354.01px;font-size:6.3px;line-height:7.56px;color:#3a3a3a;transform:scaleX(0.74);transform-origin:0 0;">6511141</div><div class="t" style="right:652.40px;top:354.01px;font-size:6.3px;line-height:7.56px;color:#3a3a3a;transform:scaleX(0.74);transform-origin:100% 0;">2025.04.20 18:55:22</div><div class="t" style="right:609.80px;top:354.01px;font-size:6.3px;line-height:7.56px;color:#3a3a3a;transform:scaleX(0.82);transform-origin:100% 0;">buy</div><div class="t" style="right:575.50px;top:354.01px;font-size:6.3px;line-height:7.56px;color:#3a3a3a;transform:scaleX(0.74);transform-origin:100% 0;">72.76</div><div class="t" style="right:532.80px;top:354.01px;font-size:6.3px;line-height:7.56px;color:#3a3a3a;transform:scaleX(0.82);transform-origin:100% 0;-webkit-text-stroke:0.15px currentColor">btcusdp</div><div class="t" style="right:490.00px;top:354.01px;font-size:6.3px;line-height:7.56px;color:#3a3a3a;transform:scaleX(0.74);transform-origin:100% 0;">84261.50</div><div class="t" style="right:448.00px;top:354.01px;font-size:6.3px;line-height:7.56px;color:#3a3a3a;transform:scaleX(0.74);transform-origin:100% 0;">84296.30</div><div class="t" style="right:404.20px;top:354.01px;font-size:6.3px;line-height:7.56px;color:#3a3a3a;transform:scaleX(0.74);transform-origin:100% 0;">84900.11</div><div class="t" style="right:310.50px;top:354.01px;font-size:6.3px;line-height:7.56px;color:#3a3a3a;transform:scaleX(0.74);transform-origin:100% 0;">2025.04.20 18:57:30</div><div class="t" style="right:268.50px;top:354.01px;font-size:6.3px;line-height:7.56px;color:#3a3a3a;transform:scaleX(0.74);transform-origin:100% 0;">84296.30</div><div class="t" style="right:224.00px;top:354.01px;font-size:6.3px;line-height:7.56px;color:#3a3a3a;transform:scaleX(0.74);transform-origin:100% 0;">-291.04</div><div class="t" style="right:181.80px;top:354.01px;font-size:6.3px;line-height:7.56px;color:#3a3a3a;transform:scaleX(0.74);transform-origin:100% 0;">0.00</div><div class="t" style="right:134.30px;top:354.01px;font-size:6.3px;line-height:7.56px;color:#3a3a3a;transform:scaleX(0.74);transform-origin:100% 0;">2 532.05</div><div class="t" style="right:4.00px;top:354.01px;font-size:6.3px;line-height:7.56px;color:#3a3a3a;transform:scaleX(0.82);transform-origin:100% 0;">memberforex.com[sl]</div><div style="left:0px;top:362px;width:798px;height:8px;background:#ebebeb"></div><div style="left:312px;top:362px;width:41.5px;height:8px;background:#ffa0a0"></div><div style="left:312px;top:369px;width:41.5px;height:1px;background:#ffc4c4"></div><div style="left:0;top:362px;width:9px;height:9px"><svg width="9" height="9" style="display:block"><path d="M1.5,1.3 H4.3 L6,3 V7.6 H1.5 Z" fill="#fff" stroke="#7a7a7a" stroke-width="0.8"/><path d="M4.3,1.3 V3 H6" fill="none" stroke="#7a7a7a" stroke-width="0.6"/><circle cx="5.3" cy="6.4" r="1.6" fill="#1f86d8"/></svg></div><div style="left:9px;top:364px;width:1px;height:4px;background:#ebe6b8"></div><div class="t" style="left:13px;top:362.45px;font-size:6.3px;line-height:7.56px;color:#3a3a3a;transform:scaleX(0.74);transform-origin:0 0;">6511141</div><div class="t" style="right:652.40px;top:362.45px;font-size:6.3px;line-height:7.56px;color:#3a3a3a;transform:scaleX(0.74);transform-origin:100% 0;">2025.04.20 18:55:01</div><div class="t" style="right:609.80px;top:362.45px;font-size:6.3px;line-height:7.56px;color:#3a3a3a;transform:scaleX(0.82);transform-origin:100% 0;">buy</div><div class="t" style="right:575.50px;top:362.45px;font-size:6.3px;line-height:7.56px;color:#3a3a3a;transform:scaleX(0.74);transform-origin:100% 0;">72.78</div><div class="t" style="right:532.80px;top:362.45px;font-size:6.3px;line-height:7.56px;color:#3a3a3a;transform:scaleX(0.82);transform-origin:100% 0;-webkit-text-stroke:0.15px currentColor">btcusdp</div><div class="t" style="right:490.00px;top:362.45px;font-size:6.3px;line-height:7.56px;color:#3a3a3a;transform:scaleX(0.74);transform-origin:100% 0;">84266.80</div><div class="t" style="right:448.00px;top:362.45px;font-size:6.3px;line-height:7.56px;color:#3a3a3a;transform:scaleX(0.74);transform-origin:100% 0;">84268.00</div><div class="t" style="right:404.20px;top:362.45px;font-size:6.3px;line-height:7.56px;color:#3a3a3a;transform:scaleX(0.74);transform-origin:100% 0;">84871.81</div><div class="t" style="right:310.50px;top:362.45px;font-size:6.3px;line-height:7.56px;color:#3a3a3a;transform:scaleX(0.74);transform-origin:100% 0;">2025.04.20 18:55:08</div><div class="t" style="right:268.50px;top:362.45px;font-size:6.3px;line-height:7.56px;color:#3a3a3a;transform:scaleX(0.74);transform-origin:100% 0;">84268.00</div><div class="t" style="right:224.00px;top:362.45px;font-size:6.3px;line-height:7.56px;color:#3a3a3a;transform:scaleX(0.74);transform-origin:100% 0;">-291.12</div><div class="t" style="right:181.80px;top:362.45px;font-size:6.3px;line-height:7.56px;color:#3a3a3a;transform:scaleX(0.74);transform-origin:100% 0;">0.00</div><div class="t" style="right:134.30px;top:362.45px;font-size:6.3px;line-height:7.56px;color:#3a3a3a;transform:scaleX(0.74);transform-origin:100% 0;">87.34</div><div class="t" style="right:4.00px;top:362.45px;font-size:6.3px;line-height:7.56px;color:#3a3a3a;transform:scaleX(0.82);transform-origin:100% 0;">memberforex.com[sl]</div><div style="left:0px;top:370px;width:798px;height:9px;background:#ffffff"></div><div style="left:312px;top:370px;width:41.5px;height:9px;background:#ffa0a0"></div><div style="left:312px;top:378px;width:41.5px;height:1px;background:#ffc4c4"></div><div style="left:0;top:370px;width:9px;height:9px"><svg width="9" height="9" style="display:block"><path d="M1.5,1.3 H4.3 L6,3 V7.6 H1.5 Z" fill="#fff" stroke="#7a7a7a" stroke-width="0.8"/><path d="M4.3,1.3 V3 H6" fill="none" stroke="#7a7a7a" stroke-width="0.6"/><circle cx="5.3" cy="6.4" r="1.6" fill="#1f86d8"/></svg></div><div style="left:9px;top:372px;width:1px;height:4px;background:#ebe6b8"></div><div class="t" style="left:13px;top:370.90px;font-size:6.3px;line-height:7.56px;color:#3a3a3a;transform:scaleX(0.74);transform-origin:0 0;">6511140</div><div class="t" style="right:652.40px;top:370.90px;font-size:6.3px;line-height:7.56px;color:#3a3a3a;transform:scaleX(0.74);transform-origin:100% 0;">2025.04.20 18:53:50</div><div class="t" style="right:609.80px;top:370.90px;font-size:6.3px;line-height:7.56px;color:#3a3a3a;transform:scaleX(0.82);transform-origin:100% 0;">buy</div><div class="t" style="right:575.50px;top:370.90px;font-size:6.3px;line-height:7.56px;color:#3a3a3a;transform:scaleX(0.74);transform-origin:100% 0;">72.78</div><div class="t" style="right:532.80px;top:370.90px;font-size:6.3px;line-height:7.56px;color:#3a3a3a;transform:scaleX(0.82);transform-origin:100% 0;-webkit-text-stroke:0.15px currentColor">btcusdp</div><div class="t" style="right:490.00px;top:370.90px;font-size:6.3px;line-height:7.56px;color:#3a3a3a;transform:scaleX(0.74);transform-origin:100% 0;">84281.50</div><div class="t" style="right:448.00px;top:370.90px;font-size:6.3px;line-height:7.56px;color:#3a3a3a;transform:scaleX(0.74);transform-origin:100% 0;">84279.30</div><div class="t" style="right:404.20px;top:370.90px;font-size:6.3px;line-height:7.56px;color:#3a3a3a;transform:scaleX(0.74);transform-origin:100% 0;">84883.11</div><div class="t" style="right:310.50px;top:370.90px;font-size:6.3px;line-height:7.56px;color:#3a3a3a;transform:scaleX(0.74);transform-origin:100% 0;">2025.04.20 18:54:01</div><div class="t" style="right:268.50px;top:370.90px;font-size:6.3px;line-height:7.56px;color:#3a3a3a;transform:scaleX(0.74);transform-origin:100% 0;">84279.30</div><div class="t" style="right:224.00px;top:370.90px;font-size:6.3px;line-height:7.56px;color:#3a3a3a;transform:scaleX(0.74);transform-origin:100% 0;">-291.12</div><div class="t" style="right:181.80px;top:370.90px;font-size:6.3px;line-height:7.56px;color:#3a3a3a;transform:scaleX(0.74);transform-origin:100% 0;">0.00</div><div class="t" style="right:134.30px;top:370.90px;font-size:6.3px;line-height:7.56px;color:#3a3a3a;transform:scaleX(0.74);transform-origin:100% 0;">-160.12</div><div class="t" style="right:4.00px;top:370.90px;font-size:6.3px;line-height:7.56px;color:#3a3a3a;transform:scaleX(0.82);transform-origin:100% 0;">memberforex.com[sl]</div><div style="left:0px;top:379px;width:798px;height:8px;background:#ebebeb"></div><div style="left:312px;top:379px;width:41.5px;height:8px;background:#ffa0a0"></div><div style="left:312px;top:386px;width:41.5px;height:1px;background:#ffc4c4"></div><div style="left:0;top:379px;width:9px;height:9px"><svg width="9" height="9" style="display:block"><path d="M1.5,1.3 H4.3 L6,3 V7.6 H1.5 Z" fill="#fff" stroke="#7a7a7a" stroke-width="0.8"/><path d="M4.3,1.3 V3 H6" fill="none" stroke="#7a7a7a" stroke-width="0.6"/><circle cx="5.3" cy="6.4" r="1.6" fill="#1f86d8"/></svg></div><div style="left:9px;top:381px;width:1px;height:4px;background:#ebe6b8"></div><div class="t" style="left:13px;top:379.34px;font-size:6.3px;line-height:7.56px;color:#3a3a3a;transform:scaleX(0.74);transform-origin:0 0;">6511141</div><div class="t" style="right:652.40px;top:379.34px;font-size:6.3px;line-height:7.56px;color:#3a3a3a;transform:scaleX(0.74);transform-origin:100% 0;">2025.04.20 18:57:34</div><div class="t" style="right:609.80px;top:379.34px;font-size:6.3px;line-height:7.56px;color:#3a3a3a;transform:scaleX(0.82);transform-origin:100% 0;">buy</div><div class="t" style="right:575.50px;top:379.34px;font-size:6.3px;line-height:7.56px;color:#3a3a3a;transform:scaleX(0.74);transform-origin:100% 0;">72.97</div><div class="t" style="right:532.80px;top:379.34px;font-size:6.3px;line-height:7.56px;color:#3a3a3a;transform:scaleX(0.82);transform-origin:100% 0;-webkit-text-stroke:0.15px currentColor">btcusdp</div><div class="t" style="right:490.00px;top:379.34px;font-size:6.3px;line-height:7.56px;color:#3a3a3a;transform:scaleX(0.74);transform-origin:100% 0;">84286.20</div><div class="t" style="right:448.00px;top:379.34px;font-size:6.3px;line-height:7.56px;color:#3a3a3a;transform:scaleX(0.74);transform-origin:100% 0;">84317.20</div><div class="t" style="right:404.20px;top:379.34px;font-size:6.3px;line-height:7.56px;color:#3a3a3a;transform:scaleX(0.74);transform-origin:100% 0;">84921.01</div><div class="t" style="right:310.50px;top:379.34px;font-size:6.3px;line-height:7.56px;color:#3a3a3a;transform:scaleX(0.74);transform-origin:100% 0;">2025.04.20 18:58:59</div><div class="t" style="right:268.50px;top:379.34px;font-size:6.3px;line-height:7.56px;color:#3a3a3a;transform:scaleX(0.74);transform-origin:100% 0;">84317.20</div><div class="t" style="right:224.00px;top:379.34px;font-size:6.3px;line-height:7.56px;color:#3a3a3a;transform:scaleX(0.74);transform-origin:100% 0;">-291.88</div><div class="t" style="right:181.80px;top:379.34px;font-size:6.3px;line-height:7.56px;color:#3a3a3a;transform:scaleX(0.74);transform-origin:100% 0;">0.00</div><div class="t" style="right:134.30px;top:379.34px;font-size:6.3px;line-height:7.56px;color:#3a3a3a;transform:scaleX(0.74);transform-origin:100% 0;">2 262.07</div><div class="t" style="right:4.00px;top:379.34px;font-size:6.3px;line-height:7.56px;color:#3a3a3a;transform:scaleX(0.82);transform-origin:100% 0;">memberforex.com[sl]</div><div style="left:0px;top:387px;width:798px;height:9px;background:#ffffff"></div><div style="left:312px;top:387px;width:41.5px;height:9px;background:#ffa0a0"></div><div style="left:312px;top:395px;width:41.5px;height:1px;background:#ffc4c4"></div><div style="left:0;top:387px;width:9px;height:9px"><svg width="9" height="9" style="display:block"><path d="M1.5,1.3 H4.3 L6,3 V7.6 H1.5 Z" fill="#fff" stroke="#7a7a7a" stroke-width="0.8"/><path d="M4.3,1.3 V3 H6" fill="none" stroke="#7a7a7a" stroke-width="0.6"/><circle cx="5.3" cy="6.4" r="1.6" fill="#1f86d8"/></svg></div><div style="left:9px;top:389px;width:1px;height:4px;background:#ebe6b8"></div><div class="t" style="left:13px;top:387.79px;font-size:6.3px;line-height:7.56px;color:#3a3a3a;transform:scaleX(0.74);transform-origin:0 0;">6511141</div><div class="t" style="right:652.40px;top:387.79px;font-size:6.3px;line-height:7.56px;color:#3a3a3a;transform:scaleX(0.74);transform-origin:100% 0;">2025.04.20 18:59:30</div><div class="t" style="right:609.80px;top:387.79px;font-size:6.3px;line-height:7.56px;color:#3a3a3a;transform:scaleX(0.82);transform-origin:100% 0;">buy</div><div class="t" style="right:575.50px;top:387.79px;font-size:6.3px;line-height:7.56px;color:#3a3a3a;transform:scaleX(0.74);transform-origin:100% 0;">73.17</div><div class="t" style="right:532.80px;top:387.79px;font-size:6.3px;line-height:7.56px;color:#3a3a3a;transform:scaleX(0.82);transform-origin:100% 0;-webkit-text-stroke:0.15px currentColor">btcusdp</div><div class="t" style="right:490.00px;top:387.79px;font-size:6.3px;line-height:7.56px;color:#3a3a3a;transform:scaleX(0.74);transform-origin:100% 0;">84318.20</div><div class="t" style="right:448.00px;top:387.79px;font-size:6.3px;line-height:7.56px;color:#3a3a3a;transform:scaleX(0.74);transform-origin:100% 0;">84328.40</div><div class="t" style="right:404.20px;top:387.79px;font-size:6.3px;line-height:7.56px;color:#3a3a3a;transform:scaleX(0.74);transform-origin:100% 0;">84932.21</div><div class="t" style="right:310.50px;top:387.79px;font-size:6.3px;line-height:7.56px;color:#3a3a3a;transform:scaleX(0.74);transform-origin:100% 0;">2025.04.20 18:59:32</div><div class="t" style="right:268.50px;top:387.79px;font-size:6.3px;line-height:7.56px;color:#3a3a3a;transform:scaleX(0.74);transform-origin:100% 0;">84328.40</div><div class="t" style="right:224.00px;top:387.79px;font-size:6.3px;line-height:7.56px;color:#3a3a3a;transform:scaleX(0.74);transform-origin:100% 0;">-292.68</div><div class="t" style="right:181.80px;top:387.79px;font-size:6.3px;line-height:7.56px;color:#3a3a3a;transform:scaleX(0.74);transform-origin:100% 0;">0.00</div><div class="t" style="right:134.30px;top:387.79px;font-size:6.3px;line-height:7.56px;color:#3a3a3a;transform:scaleX(0.74);transform-origin:100% 0;">746.33</div><div class="t" style="right:4.00px;top:387.79px;font-size:6.3px;line-height:7.56px;color:#3a3a3a;transform:scaleX(0.82);transform-origin:100% 0;">memberforex.com[sl]</div><div style="left:0px;top:396px;width:798px;height:8px;background:#ebebeb"></div><div style="left:312px;top:396px;width:41.5px;height:8px;background:#ffa0a0"></div><div style="left:312px;top:403px;width:41.5px;height:1px;background:#ffc4c4"></div><div style="left:0;top:396px;width:9px;height:9px"><svg width="9" height="9" style="display:block"><path d="M1.5,1.3 H4.3 L6,3 V7.6 H1.5 Z" fill="#fff" stroke="#7a7a7a" stroke-width="0.8"/><path d="M4.3,1.3 V3 H6" fill="none" stroke="#7a7a7a" stroke-width="0.6"/><circle cx="5.3" cy="6.4" r="1.6" fill="#1f86d8"/></svg></div><div style="left:9px;top:398px;width:1px;height:4px;background:#ebe6b8"></div><div class="t" style="left:13px;top:396.23px;font-size:6.3px;line-height:7.56px;color:#3a3a3a;transform:scaleX(0.74);transform-origin:0 0;">6511142</div><div class="t" style="right:652.40px;top:396.23px;font-size:6.3px;line-height:7.56px;color:#3a3a3a;transform:scaleX(0.74);transform-origin:100% 0;">2025.04.20 19:00:07</div><div class="t" style="right:609.80px;top:396.23px;font-size:6.3px;line-height:7.56px;color:#3a3a3a;transform:scaleX(0.82);transform-origin:100% 0;">buy</div><div class="t" style="right:575.50px;top:396.23px;font-size:6.3px;line-height:7.56px;color:#3a3a3a;transform:scaleX(0.74);transform-origin:100% 0;">73.21</div><div class="t" style="right:532.80px;top:396.23px;font-size:6.3px;line-height:7.56px;color:#3a3a3a;transform:scaleX(0.82);transform-origin:100% 0;-webkit-text-stroke:0.15px currentColor">btcusdp</div><div class="t" style="right:490.00px;top:396.23px;font-size:6.3px;line-height:7.56px;color:#3a3a3a;transform:scaleX(0.74);transform-origin:100% 0;">84302.45</div><div class="t" style="right:448.00px;top:396.23px;font-size:6.3px;line-height:7.56px;color:#3a3a3a;transform:scaleX(0.74);transform-origin:100% 0;">84311.90</div><div class="t" style="right:404.20px;top:396.23px;font-size:6.3px;line-height:7.56px;color:#3a3a3a;transform:scaleX(0.74);transform-origin:100% 0;">84915.71</div><div class="t" style="right:310.50px;top:396.23px;font-size:6.3px;line-height:7.56px;color:#3a3a3a;transform:scaleX(0.74);transform-origin:100% 0;">2025.04.20 19:00:09</div><div class="t" style="right:268.50px;top:396.23px;font-size:6.3px;line-height:7.56px;color:#3a3a3a;transform:scaleX(0.74);transform-origin:100% 0;">84311.90</div><div class="t" style="right:224.00px;top:396.23px;font-size:6.3px;line-height:7.56px;color:#3a3a3a;transform:scaleX(0.74);transform-origin:100% 0;">-292.84</div><div class="t" style="right:181.80px;top:396.23px;font-size:6.3px;line-height:7.56px;color:#3a3a3a;transform:scaleX(0.74);transform-origin:100% 0;">0.00</div><div class="t" style="right:134.30px;top:396.23px;font-size:6.3px;line-height:7.56px;color:#3a3a3a;transform:scaleX(0.74);transform-origin:100% 0;">691.83</div><div class="t" style="right:4.00px;top:396.23px;font-size:6.3px;line-height:7.56px;color:#3a3a3a;transform:scaleX(0.82);transform-origin:100% 0;">memberforex.com[sl]</div><div style="left:0px;top:404px;width:798px;height:9px;background:#ffffff"></div><div style="left:312px;top:404px;width:41.5px;height:9px;background:#ffa0a0"></div><div style="left:312px;top:412px;width:41.5px;height:1px;background:#ffc4c4"></div><div style="left:0;top:404px;width:9px;height:9px"><svg width="9" height="9" style="display:block"><path d="M1.5,1.3 H4.3 L6,3 V7.6 H1.5 Z" fill="#fff" stroke="#7a7a7a" stroke-width="0.8"/><path d="M4.3,1.3 V3 H6" fill="none" stroke="#7a7a7a" stroke-width="0.6"/><circle cx="5.3" cy="6.4" r="1.6" fill="#1f86d8"/></svg></div><div style="left:9px;top:406px;width:1px;height:4px;background:#ebe6b8"></div><div class="t" style="left:13px;top:404.68px;font-size:6.3px;line-height:7.56px;color:#3a3a3a;transform:scaleX(0.74);transform-origin:0 0;">6511142</div><div class="t" style="right:652.40px;top:404.68px;font-size:6.3px;line-height:7.56px;color:#3a3a3a;transform:scaleX(0.74);transform-origin:100% 0;">2025.04.20 19:01:17</div><div class="t" style="right:609.80px;top:404.68px;font-size:6.3px;line-height:7.56px;color:#3a3a3a;transform:scaleX(0.82);transform-origin:100% 0;">buy</div><div class="t" style="right:575.50px;top:404.68px;font-size:6.3px;line-height:7.56px;color:#3a3a3a;transform:scaleX(0.74);transform-origin:100% 0;">73.25</div><div class="t" style="right:532.80px;top:404.68px;font-size:6.3px;line-height:7.56px;color:#3a3a3a;transform:scaleX(0.82);transform-origin:100% 0;-webkit-text-stroke:0.15px currentColor">btcusdp</div><div class="t" style="right:490.00px;top:404.68px;font-size:6.3px;line-height:7.56px;color:#3a3a3a;transform:scaleX(0.74);transform-origin:100% 0;">84259.80</div><div class="t" style="right:448.00px;top:404.68px;font-size:6.3px;line-height:7.56px;color:#3a3a3a;transform:scaleX(0.74);transform-origin:100% 0;">84278.30</div><div class="t" style="right:404.20px;top:404.68px;font-size:6.3px;line-height:7.56px;color:#3a3a3a;transform:scaleX(0.74);transform-origin:100% 0;">84882.11</div><div class="t" style="right:310.50px;top:404.68px;font-size:6.3px;line-height:7.56px;color:#3a3a3a;transform:scaleX(0.74);transform-origin:100% 0;">2025.04.20 19:02:28</div><div class="t" style="right:268.50px;top:404.68px;font-size:6.3px;line-height:7.56px;color:#3a3a3a;transform:scaleX(0.74);transform-origin:100% 0;">84278.30</div><div class="t" style="right:224.00px;top:404.68px;font-size:6.3px;line-height:7.56px;color:#3a3a3a;transform:scaleX(0.74);transform-origin:100% 0;">-293.00</div><div class="t" style="right:181.80px;top:404.68px;font-size:6.3px;line-height:7.56px;color:#3a3a3a;transform:scaleX(0.74);transform-origin:100% 0;">0.00</div><div class="t" style="right:134.30px;top:404.68px;font-size:6.3px;line-height:7.56px;color:#3a3a3a;transform:scaleX(0.74);transform-origin:100% 0;">1 355.13</div><div class="t" style="right:4.00px;top:404.68px;font-size:6.3px;line-height:7.56px;color:#3a3a3a;transform:scaleX(0.82);transform-origin:100% 0;">memberforex.com[sl]</div><div style="left:0px;top:413px;width:798px;height:8px;background:#ebebeb"></div><div style="left:312px;top:413px;width:41.5px;height:8px;background:#ffa0a0"></div><div style="left:312px;top:420px;width:41.5px;height:1px;background:#ffc4c4"></div><div style="left:0;top:413px;width:9px;height:9px"><svg width="9" height="9" style="display:block"><path d="M1.5,1.3 H4.3 L6,3 V7.6 H1.5 Z" fill="#fff" stroke="#7a7a7a" stroke-width="0.8"/><path d="M4.3,1.3 V3 H6" fill="none" stroke="#7a7a7a" stroke-width="0.6"/><circle cx="5.3" cy="6.4" r="1.6" fill="#1f86d8"/></svg></div><div style="left:9px;top:415px;width:1px;height:4px;background:#ebe6b8"></div><div class="t" style="left:13px;top:413.12px;font-size:6.3px;line-height:7.56px;color:#3a3a3a;transform:scaleX(0.74);transform-origin:0 0;">6511140</div><div class="t" style="right:652.40px;top:413.12px;font-size:6.3px;line-height:7.56px;color:#3a3a3a;transform:scaleX(0.74);transform-origin:100% 0;">2025.04.20 19:04:25</div><div class="t" style="right:609.80px;top:413.12px;font-size:6.3px;line-height:7.56px;color:#3a3a3a;transform:scaleX(0.82);transform-origin:100% 0;">buy</div><div class="t" style="right:575.50px;top:413.12px;font-size:6.3px;line-height:7.56px;color:#3a3a3a;transform:scaleX(0.74);transform-origin:100% 0;">73.31</div><div class="t" style="right:532.80px;top:413.12px;font-size:6.3px;line-height:7.56px;color:#3a3a3a;transform:scaleX(0.82);transform-origin:100% 0;-webkit-text-stroke:0.15px currentColor">btcusdp</div><div class="t" style="right:490.00px;top:413.12px;font-size:6.3px;line-height:7.56px;color:#3a3a3a;transform:scaleX(0.74);transform-origin:100% 0;">84235.70</div><div class="t" style="right:448.00px;top:413.12px;font-size:6.3px;line-height:7.56px;color:#3a3a3a;transform:scaleX(0.74);transform-origin:100% 0;">84265.90</div><div class="t" style="right:404.20px;top:413.12px;font-size:6.3px;line-height:7.56px;color:#3a3a3a;transform:scaleX(0.74);transform-origin:100% 0;">84869.71</div><div class="t" style="right:310.50px;top:413.12px;font-size:6.3px;line-height:7.56px;color:#3a3a3a;transform:scaleX(0.74);transform-origin:100% 0;">2025.04.20 19:05:04</div><div class="t" style="right:268.50px;top:413.12px;font-size:6.3px;line-height:7.56px;color:#3a3a3a;transform:scaleX(0.74);transform-origin:100% 0;">84265.90</div><div class="t" style="right:224.00px;top:413.12px;font-size:6.3px;line-height:7.56px;color:#3a3a3a;transform:scaleX(0.74);transform-origin:100% 0;">-293.24</div><div class="t" style="right:181.80px;top:413.12px;font-size:6.3px;line-height:7.56px;color:#3a3a3a;transform:scaleX(0.74);transform-origin:100% 0;">0.00</div><div class="t" style="right:134.30px;top:413.12px;font-size:6.3px;line-height:7.56px;color:#3a3a3a;transform:scaleX(0.74);transform-origin:100% 0;">2 213.96</div><div class="t" style="right:4.00px;top:413.12px;font-size:6.3px;line-height:7.56px;color:#3a3a3a;transform:scaleX(0.82);transform-origin:100% 0;">memberforex.com[sl]</div><div style="left:0px;top:421px;width:798px;height:8px;background:#ffffff"></div><div style="left:312px;top:421px;width:41.5px;height:8px;background:#ffa0a0"></div><div style="left:312px;top:428px;width:41.5px;height:1px;background:#ffc4c4"></div><div style="left:0;top:421px;width:9px;height:9px"><svg width="9" height="9" style="display:block"><path d="M1.5,1.3 H4.3 L6,3 V7.6 H1.5 Z" fill="#fff" stroke="#7a7a7a" stroke-width="0.8"/><path d="M4.3,1.3 V3 H6" fill="none" stroke="#7a7a7a" stroke-width="0.6"/><circle cx="5.3" cy="6.4" r="1.6" fill="#1f86d8"/></svg></div><div style="left:9px;top:423px;width:1px;height:4px;background:#ebe6b8"></div><div class="t" style="left:13px;top:421.57px;font-size:6.3px;line-height:7.56px;color:#3a3a3a;transform:scaleX(0.74);transform-origin:0 0;">6511142</div><div class="t" style="right:652.40px;top:421.57px;font-size:6.3px;line-height:7.56px;color:#3a3a3a;transform:scaleX(0.74);transform-origin:100% 0;">2025.04.20 19:03:43</div><div class="t" style="right:609.80px;top:421.57px;font-size:6.3px;line-height:7.56px;color:#3a3a3a;transform:scaleX(0.82);transform-origin:100% 0;">buy</div><div class="t" style="right:575.50px;top:421.57px;font-size:6.3px;line-height:7.56px;color:#3a3a3a;transform:scaleX(0.74);transform-origin:100% 0;">73.33</div><div class="t" style="right:532.80px;top:421.57px;font-size:6.3px;line-height:7.56px;color:#3a3a3a;transform:scaleX(0.82);transform-origin:100% 0;-webkit-text-stroke:0.15px currentColor">btcusdp</div><div class="t" style="right:490.00px;top:421.57px;font-size:6.3px;line-height:7.56px;color:#3a3a3a;transform:scaleX(0.74);transform-origin:100% 0;">84251.70</div><div class="t" style="right:448.00px;top:421.57px;font-size:6.3px;line-height:7.56px;color:#3a3a3a;transform:scaleX(0.74);transform-origin:100% 0;">84251.60</div><div class="t" style="right:404.20px;top:421.57px;font-size:6.3px;line-height:7.56px;color:#3a3a3a;transform:scaleX(0.74);transform-origin:100% 0;">84855.41</div><div class="t" style="right:310.50px;top:421.57px;font-size:6.3px;line-height:7.56px;color:#3a3a3a;transform:scaleX(0.74);transform-origin:100% 0;">2025.04.20 19:04:07</div><div class="t" style="right:268.50px;top:421.57px;font-size:6.3px;line-height:7.56px;color:#3a3a3a;transform:scaleX(0.74);transform-origin:100% 0;">84251.60</div><div class="t" style="right:224.00px;top:421.57px;font-size:6.3px;line-height:7.56px;color:#3a3a3a;transform:scaleX(0.74);transform-origin:100% 0;">-293.32</div><div class="t" style="right:181.80px;top:421.57px;font-size:6.3px;line-height:7.56px;color:#3a3a3a;transform:scaleX(0.74);transform-origin:100% 0;">0.00</div><div class="t" style="right:134.30px;top:421.57px;font-size:6.3px;line-height:7.56px;color:#3a3a3a;transform:scaleX(0.74);transform-origin:100% 0;">-7.33</div><div class="t" style="right:4.00px;top:421.57px;font-size:6.3px;line-height:7.56px;color:#3a3a3a;transform:scaleX(0.82);transform-origin:100% 0;">memberforex.com[sl]</div><div style="left:54px;top:208px;width:1px;height:221px;background:#e2e2e2"></div><div style="left:54px;top:235px;width:1px;height:9px;background:#3f92de"></div><div style="left:150px;top:208px;width:1px;height:221px;background:#e2e2e2"></div><div style="left:150px;top:235px;width:1px;height:9px;background:#3f92de"></div><div style="left:192px;top:208px;width:1px;height:221px;background:#e2e2e2"></div><div style="left:192px;top:235px;width:1px;height:9px;background:#3f92de"></div><div style="left:226px;top:208px;width:1px;height:221px;background:#e2e2e2"></div><div style="left:226px;top:235px;width:1px;height:9px;background:#3f92de"></div><div style="left:268px;top:208px;width:1px;height:221px;background:#e2e2e2"></div><div style="left:268px;top:235px;width:1px;height:9px;background:#3f92de"></div><div style="left:312px;top:208px;width:1px;height:10px;background:#e2e2e2"></div><div style="left:354px;top:208px;width:1px;height:10px;background:#e2e2e2"></div><div style="left:397px;top:208px;width:1px;height:221px;background:#e2e2e2"></div><div style="left:397px;top:235px;width:1px;height:9px;background:#3f92de"></div><div style="left:491px;top:208px;width:1px;height:221px;background:#e2e2e2"></div><div style="left:491px;top:235px;width:1px;height:9px;background:#3f92de"></div><div style="left:534px;top:208px;width:1px;height:221px;background:#e2e2e2"></div><div style="left:534px;top:235px;width:1px;height:9px;background:#3f92de"></div><div style="left:577px;top:208px;width:1px;height:221px;background:#e2e2e2"></div><div style="left:577px;top:235px;width:1px;height:9px;background:#3f92de"></div><div style="left:620px;top:208px;width:1px;height:221px;background:#e2e2e2"></div><div style="left:620px;top:235px;width:1px;height:9px;background:#3f92de"></div><div style="left:667px;top:208px;width:1px;height:221px;background:#e2e2e2"></div><div style="left:667px;top:235px;width:1px;height:9px;background:#3f92de"></div><div style="left:10.5px;top:216px;width:2.5px;height:213px;background:#dadada"></div><div style="left:28.2px;top:216px;width:3px;height:213px;background:#dadada"></div><div style="left:0px;top:429px;width:800px;height:9px;background:#f0f0f0"></div><div style="left:0px;top:429px;width:50px;height:1px;background:#6a6a6a"></div><div style="left:95px;top:429px;width:705px;height:1px;background:#6a6a6a"></div><div style="left:50px;top:429px;width:46px;height:9px;background:#fff;border-left:1px solid #666;border-right:1px solid #666;border-bottom:1px solid #666"></div><div class="t" style="left:5px;top:430.18px;font-size:5.3px;line-height:6.36px;color:#7a7a7a;transform:scaleX(0.92);transform-origin:0 0;">Trade</div><div class="t" style="left:25.5px;top:430.18px;font-size:5.3px;line-height:6.36px;color:#7a7a7a;transform:scaleX(0.92);transform-origin:0 0;">Exposure</div><div class="t" style="left:54px;top:430.18px;font-size:5.3px;line-height:6.36px;color:#222;transform:scaleX(0.98);transform-origin:0 0;">Account History</div><div class="t" style="left:99px;top:430.18px;font-size:5.3px;line-height:6.36px;color:#7a7a7a;transform:scaleX(0.92);transform-origin:0 0;">News</div><div class="t" style="left:120px;top:430.18px;font-size:5.3px;line-height:6.36px;color:#7a7a7a;transform:scaleX(0.92);transform-origin:0 0;">Alerts</div><div class="t" style="left:141px;top:430.18px;font-size:5.3px;line-height:6.36px;color:#7a7a7a;transform:scaleX(0.92);transform-origin:0 0;">Mailbox</div><div class="t" style="left:171px;top:430.18px;font-size:5.3px;line-height:6.36px;color:#7a7a7a;transform:scaleX(0.92);transform-origin:0 0;">Market</div><div class="t" style="left:201.5px;top:430.18px;font-size:5.3px;line-height:6.36px;color:#7a7a7a;transform:scaleX(0.92);transform-origin:0 0;">Articles</div><div class="t" style="left:227.5px;top:430.18px;font-size:5.3px;line-height:6.36px;color:#7a7a7a;transform:scaleX(0.92);transform-origin:0 0;">Code Base</div><div class="t" style="left:259px;top:430.18px;font-size:5.3px;line-height:6.36px;color:#7a7a7a;transform:scaleX(0.92);transform-origin:0 0;">Experts</div><div class="t" style="left:284px;top:430.18px;font-size:5.3px;line-height:6.36px;color:#7a7a7a;transform:scaleX(0.92);transform-origin:0 0;">Journal</div><div style="left:22px;top:431px;width:1px;height:5.5px;background:#b4b4b4"></div><div style="left:116px;top:431px;width:1px;height:5.5px;background:#b4b4b4"></div><div style="left:137px;top:431px;width:1px;height:5.5px;background:#b4b4b4"></div><div style="left:166px;top:431px;width:1px;height:5.5px;background:#b4b4b4"></div><div style="left:196px;top:431px;width:1px;height:5.5px;background:#b4b4b4"></div><div style="left:222px;top:431px;width:1px;height:5.5px;background:#b4b4b4"></div><div style="left:255px;top:431px;width:1px;height:5.5px;background:#b4b4b4"></div><div style="left:280px;top:431px;width:1px;height:5.5px;background:#b4b4b4"></div><div style="left:304px;top:431px;width:1px;height:5.5px;background:#b4b4b4"></div><div class="t" style="left:159.5px;top:433.39px;font-size:3.6px;line-height:4.32px;color:#e02020;font-weight:bold">6</div><div class="t" style="left:187.5px;top:433.39px;font-size:3.6px;line-height:4.32px;color:#e02020;transform:scaleX(0.9);transform-origin:0 0;font-weight:bold">120</div><div style="left:0px;top:438px;width:800px;height:1px;background:#f0f0f0"></div><div style="left:0px;top:439px;width:800px;height:1px;background:#dedede"></div><div style="left:0px;top:440px;width:800px;height:9px;background:#f0f0f0"></div><div class="t" style="left:0px;top:442.56px;font-size:4.9px;line-height:5.88px;color:#222;">r Help, press F1</div><div style="left:512px;top:441.5px;width:1px;height:7.5px;background:#c8c8c8"></div><div style="left:562px;top:441.5px;width:1px;height:7.5px;background:#c8c8c8"></div><div style="left:606px;top:441.5px;width:1px;height:7.5px;background:#c8c8c8"></div><div style="left:636px;top:441.5px;width:1px;height:7.5px;background:#c8c8c8"></div><div style="left:666px;top:441.5px;width:1px;height:7.5px;background:#c8c8c8"></div><div style="left:694px;top:441.5px;width:1px;height:7.5px;background:#c8c8c8"></div><div style="left:724px;top:441.5px;width:1px;height:7.5px;background:#c8c8c8"></div><div style="left:751px;top:441.5px;width:1px;height:7.5px;background:#c8c8c8"></div><div class="t" style="left:515px;top:442.56px;font-size:4.9px;line-height:5.88px;color:#222;">Default</div><div style="left:754px;top:441.5px;width:11px;height:7px"><svg width="11" height="7" viewBox="0 0 11 7" style="display:block"><rect x="0.5" y="1" width="10" height="2.6" fill="#6aa032"/><rect x="0.5" y="3.6" width="10" height="3" fill="#2c6aa8"/><path d="M2.5,1 V7 M4.5,1 V7 M6.5,1 V7 M8.5,1 V7" stroke="#f0f0f0" stroke-width="0.5"/></svg></div><div class="t" style="left:766px;top:442.56px;font-size:4.9px;line-height:5.88px;color:#222;">1009/294 kb</div><div style="left:0px;top:449px;width:8px;height:1px;background:#505050"></div><div style="left:117px;top:449px;width:683px;height:1px;background:#505050"></div></body></html>
